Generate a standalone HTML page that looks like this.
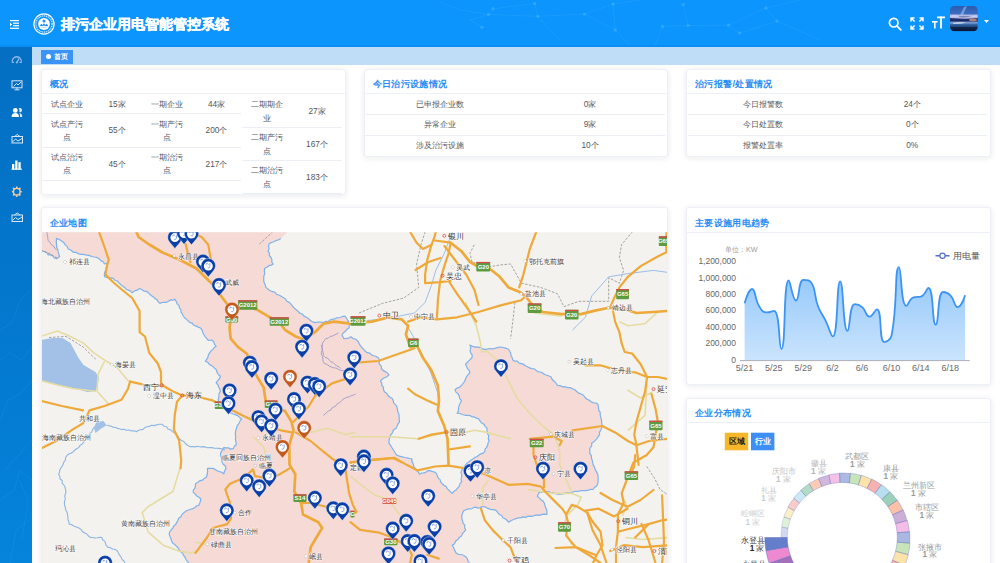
<!DOCTYPE html>
<html><head><meta charset="utf-8">
<style>
*{box-sizing:border-box;margin:0;padding:0}
html,body{width:1000px;height:563px;overflow:hidden;background:#FFFFFF;font-family:"Liberation Sans",sans-serif;color:#606266}
.abs{position:absolute}
#hdr{left:0;top:0;width:1000px;height:46.5px;background:#0B95FD;overflow:hidden}
#side{left:0;top:46.5px;width:32px;height:517px;background:linear-gradient(#046FC3 0%,#0376CB 40%,#047DD4 75%,#0584DC 100%)}
#crumb{left:32px;top:46.5px;width:968px;height:18px;background:#BFDDF6}
#tag{left:8.7px;top:3px;width:32px;height:14.8px;background:#3A94F8;color:#fff;font-size:6.9px;line-height:14.8px}
#tag i{position:absolute;left:5.5px;top:4.9px;width:5px;height:5px;border-radius:50%;background:#fff}
#tag span{position:absolute;left:13.5px;top:.5px;font-weight:bold}
.card{position:absolute;background:#fff;border:1px solid #EDF0F6;border-radius:3px;box-shadow:0 1px 6px rgba(0,20,60,.09);overflow:hidden}
.ttl{position:absolute;left:8px;top:8.5px;letter-spacing:.35px;font-size:9.4px;font-weight:bold;color:#2A8CF4;line-height:11px;white-space:nowrap}
.hl{position:absolute;left:0;right:0;height:1px;background:#EDF0F6}
.tx{position:absolute;font-size:8.3px;line-height:13px;color:#55575C;text-align:center;white-space:nowrap}
.rl{position:absolute;height:1px;background:#EBEEF5}
</style></head><body>
<div id="hdr" class="abs">
  <svg class="abs" style="left:0;top:0" width="1000" height="47" viewBox="0 0 1000 47">
    <g stroke="#5CC2FF" stroke-opacity=".22" stroke-width=".8" fill="none" style="filter:blur(.3px)">
      <polyline points="440,2 460,10 488.5,14.5 537.8,16.3 584.5,14.1 613.1,4 640,0"/>
      <polyline points="481.9,27.3 470,20 488.5,14.5 492.9,8.8 534.7,3.5 537.8,16.3 560,40"/>
      <polyline points="584.5,14.1 615.3,30 613.1,4"/>
      <polyline points="615.3,30 630,46"/>
      <polyline points="655,46 662.5,26.4 688,25.6 728.5,25.1 739.6,33 777,21.1 766,7.9 728.5,25.1"/>
      <polyline points="683.2,4.4 688,25.6"/>
      <polyline points="766,7.9 800,0"/>
      <polyline points="777,21.1 820,40"/>
    </g>
    <g fill="#6BCBFF" fill-opacity=".3" style="filter:blur(.3px)">
      <circle cx="492.9" cy="8.8" r="1.7"/><circle cx="488.5" cy="14.5" r="1.7"/><circle cx="534.7" cy="3.5" r="1.7"/>
      <circle cx="537.8" cy="16.3" r="1.7"/><circle cx="584.5" cy="14.1" r="1.7"/><circle cx="613.1" cy="4" r="1.7"/>
      <circle cx="615.3" cy="30" r="1.7"/><circle cx="662.5" cy="26.4" r="1.7"/><circle cx="683.2" cy="4.4" r="1.7"/>
      <circle cx="688" cy="25.6" r="1.7"/><circle cx="728.5" cy="25.1" r="1.7"/><circle cx="739.6" cy="33" r="1.7"/>
      <circle cx="766" cy="7.9" r="1.7"/><circle cx="777" cy="21.1" r="1.7"/><circle cx="481.9" cy="27.3" r="1.7"/>
    </g>
    <rect x="0" y="45.5" width="1000" height="1" fill="#0A7FE0" fill-opacity=".6"/>
  </svg>
  <svg class="abs" style="left:10px;top:19.5px" width="10" height="9" viewBox="0 0 10 9">
    <g fill="#fff"><rect x="0" y="0" width="9" height="1.2"/><rect x="3" y="2.6" width="6" height="1.2"/><rect x="3" y="5.1" width="6" height="1.2"/><rect x="0" y="7.7" width="9" height="1.2"/><path d="M0 2.4 L2.2 4.4 L0 6.4Z"/></g>
  </svg>
  <svg class="abs" style="left:32.5px;top:13.2px" width="22" height="22" viewBox="0 0 22 22">
    <circle cx="11" cy="11" r="10.1" fill="none" stroke="#fff" stroke-width="1.2"/>
    <circle cx="11" cy="11" r="8.1" fill="none" stroke="#fff" stroke-width="1.3" stroke-dasharray="1.1 .8" stroke-opacity=".85"/>
    <circle cx="11" cy="11" r="5.9" fill="#fff"/>
    <circle cx="11" cy="8.1" r="1.5" fill="#1E8CF2"/>
    <path d="M6.6 13.2 L8.2 10.8 L9.6 12 L11 10.2 L12.4 12 L13.8 10.8 L15.4 13.2 Q11 12.2 6.6 13.2Z" fill="#1E8CF2"/>
    <path d="M8.2 14.2 H13.8" stroke="#1E8CF2" stroke-width=".6" stroke-opacity=".6"/>
  </svg>
  <div class="abs" style="left:60.5px;top:16px;font-size:14.4px;line-height:17px;font-weight:bold;color:#fff;white-space:nowrap;-webkit-text-stroke:.35px #fff">排污企业用电智能管控系统</div>
  <svg class="abs" style="left:887.5px;top:16.5px" width="14" height="14" viewBox="0 0 14 14">
    <circle cx="5.7" cy="5.7" r="4.3" fill="none" stroke="#fff" stroke-width="1.7"/>
    <path d="M8.8 8.8 L12.8 12.8" stroke="#fff" stroke-width="1.9" stroke-linecap="round"/>
  </svg>
  <svg class="abs" style="left:909.5px;top:16.5px" width="14" height="13" viewBox="0 0 14 13">
    <g stroke="#fff" stroke-width="1.4" fill="none">
      <path d="M1 4.5 V1 H4.5 M1 1 L4.6 4.6"/><path d="M13 4.5 V1 H9.5 M13 1 L9.4 4.6"/>
      <path d="M1 8.5 V12 H4.5 M1 12 L4.6 8.4"/><path d="M13 8.5 V12 H9.5 M13 12 L9.4 8.4"/>
    </g>
  </svg>
  <svg class="abs" style="left:932px;top:16px" width="13" height="13" viewBox="0 0 13 13">
    <g fill="#fff"><rect x="5" y="0.5" width="8" height="1.8"/><rect x="8.1" y="0.5" width="1.8" height="12"/>
    <rect x="0" y="5" width="5.6" height="1.6"/><rect x="2" y="5" width="1.6" height="7.5"/></g>
  </svg>
  <svg class="abs" style="left:950.2px;top:6.4px" width="27.8" height="25.3" viewBox="0 0 27.8 25.3">
    <defs><clipPath id="avc"><rect width="27.8" height="25.3" rx="4.5"/></clipPath>
    <linearGradient id="avg" x1="0" y1="0" x2="0" y2="1">
      <stop offset="0" stop-color="#2B5BAE"/><stop offset=".3" stop-color="#3A6CC0"/><stop offset=".38" stop-color="#B9BEEA"/>
      <stop offset=".46" stop-color="#283C86"/><stop offset=".58" stop-color="#1A2760"/><stop offset=".66" stop-color="#7FA6DC"/>
      <stop offset=".74" stop-color="#2D5E9C"/><stop offset="1" stop-color="#0C1A3C"/></linearGradient></defs>
    <g clip-path="url(#avc)" style="filter:blur(.35px)">
      <rect width="27.8" height="25.3" fill="url(#avg)"/>
      <path d="M10 9 L14 1 L17 0 L13 9Z" fill="#A8C4F2" fill-opacity=".55"/>
      <path d="M0 10 Q6 8 10 11 Q16 12 22 10 Q26 9 27.8 10 L27.8 12 Q18 13 10 12.5 Q4 12 0 12Z" fill="#E4E0FA" fill-opacity=".75"/>
      <ellipse cx="23" cy="14" rx="4" ry="1.2" fill="#F0A27A" fill-opacity=".7"/>
      <path d="M3 17 Q9 15.5 16 16.5 Q12 18 3 18Z" fill="#DDE8FA" fill-opacity=".7"/>
      <rect y="21" width="27.8" height="4.3" fill="#08122E" fill-opacity=".6"/>
    </g>
  </svg>
  <svg class="abs" style="left:984px;top:20px" width="5" height="3" viewBox="0 0 5 3"><path d="M0 0H5L2.5 3Z" fill="#fff"/></svg>
</div>
<div id="side" class="abs">
  <svg class="abs" style="left:0;top:0" width="32" height="517" viewBox="0 46.5 32 517">
    <g stroke="#3FB0FF" stroke-opacity=".22" stroke-width=".7" fill="none">
      <polyline points="0,330 12,322 20,300 30,290"/><polyline points="0,360 10,352 22,360 32,345"/>
      <polyline points="0,420 8,400 22,392 32,380"/><polyline points="5,470 18,455 32,440"/>
      <polyline points="0,500 14,490 20,470 32,480"/><polyline points="10,563 16,530 28,520"/>
      <polyline points="20,480 28,500 22,540"/>
    </g>
    <!-- gauge -->
    <g fill="none" stroke="#8EB8F2" stroke-width="1.3">
      <path d="M12.3 62 A4.6 4.6 0 1 1 21.2 62"/>
      <path d="M16.8 62 L19 58.2"/>
    </g>
    <g fill="#8EB8F2"><circle cx="16.8" cy="62" r="1"/><rect x="12" y="61.3" width="2" height="1.2"/><rect x="19.5" y="61.3" width="2" height="1.2"/></g>
    <!-- monitor -->
    <g fill="none" stroke="#D6E6F8" stroke-width="1">
      <rect x="12" y="80.3" width="10" height="7"/>
      <path d="M13.5 86 L16.5 83 L18 84.5 L21 81.5"/>
      <path d="M14.5 89.3 H19.5 M17 87.3 V89.3"/>
    </g>
    <!-- users -->
    <g fill="#fff">
      <circle cx="15.3" cy="109.9" r="2.4"/>
      <path d="M11.6 116.4 Q11.6 112.6 15.3 112.6 Q19 112.6 19 116.4Z"/>
      <path d="M18.6 107.8 A2.2 2.2 0 1 1 19.4 111.8 Q20.2 110 18.6 107.8Z" fill-opacity=".85"/>
      <path d="M19.6 112.6 Q22.2 113 22.2 116.4 H20 Q20 114 19.6 112.6Z" fill-opacity=".85"/>
    </g>
    <!-- picture 1 -->
    <g fill="none" stroke="#D6E6F8" stroke-width="1">
      <rect x="12" y="136" width="10.5" height="6.5"/>
      <path d="M14.5 136 L17.2 134 L20 136"/>
      <path d="M12.5 141.5 L15.5 138.5 L18 140.5 L22 138"/>
    </g>
    <!-- bar chart -->
    <g fill="#fff">
      <rect x="12" y="163.5" width="2.3" height="5.5"/><rect x="15.2" y="160" width="2.3" height="9"/>
      <rect x="18.4" y="161.7" width="2.3" height="7.3"/><rect x="11.5" y="168.2" width="10.5" height="1"/>
    </g>
    <!-- gear -->
    <g fill="none" stroke="#F2CDA8" stroke-width="1.4">
      <circle cx="16.8" cy="191.2" r="3.3"/>
    </g>
    <g fill="#F2CDA8">
      <rect x="16" y="186" width="1.6" height="1.6"/><rect x="16" y="194.8" width="1.6" height="1.6"/>
      <rect x="11.9" y="190.4" width="1.6" height="1.6"/><rect x="20.1" y="190.4" width="1.6" height="1.6"/>
      <rect x="12.9" y="187.2" width="1.6" height="1.6" transform="rotate(45 13.7 188)"/><rect x="19.1" y="187.2" width="1.6" height="1.6" transform="rotate(45 19.9 188)"/>
      <rect x="12.9" y="193.6" width="1.6" height="1.6" transform="rotate(45 13.7 194.4)"/><rect x="19.1" y="193.6" width="1.6" height="1.6" transform="rotate(45 19.9 194.4)"/>
    </g>
    <!-- picture 2 -->
    <g fill="none" stroke="#D6E6F8" stroke-width="1">
      <rect x="12" y="214.5" width="10.5" height="6.5"/>
      <path d="M14.5 214.5 L17.2 212.5 L20 214.5"/>
      <path d="M12.5 220 L15.5 217 L18 219 L22 216.5"/>
    </g>
  </svg>
</div>
<div id="crumb" class="abs"><div id="tag" class="abs"><i></i><span>首页</span></div></div>

<!-- card 1 -->
<div class="card" style="left:40.5px;top:68.5px;width:305px;height:126.5px">
  <div class="ttl">概况</div>
  <div class="hl" style="top:23.8px"></div>
  <div class="rl" style="left:0px;top:43.6px;width:199.5px"></div>
  <div class="rl" style="left:0px;top:77.0px;width:199.5px"></div>
  <div class="rl" style="left:0px;top:110.2px;width:199.5px"></div>
  <div class="rl" style="left:201.1px;top:57.4px;width:99px"></div>
  <div class="rl" style="left:201.1px;top:90.5px;width:99px"></div>
  <div class="rl" style="left:201.1px;top:123.4px;width:99px"></div>
  <div class="tx" style="left:7.0px;top:28.5px;width:36px;white-space:normal;line-height:13.5px">试点企业</div>
  <div class="tx" style="left:51.5px;top:28.5px;width:48px;white-space:normal;line-height:13.5px">15家</div>
  <div class="tx" style="left:107.0px;top:28.5px;width:36px;white-space:normal;line-height:13.5px">一期企业</div>
  <div class="tx" style="left:151.0px;top:28.5px;width:48px;white-space:normal;line-height:13.5px">44家</div>
  <div class="tx" style="left:7.0px;top:48.1px;width:36px;white-space:normal;line-height:13.5px">试点产污点</div>
  <div class="tx" style="left:51.5px;top:54.9px;width:48px;white-space:normal;line-height:13.5px">55个</div>
  <div class="tx" style="left:107.0px;top:48.1px;width:36px;white-space:normal;line-height:13.5px">一期产污点</div>
  <div class="tx" style="left:151.0px;top:54.9px;width:48px;white-space:normal;line-height:13.5px">200个</div>
  <div class="tx" style="left:7.0px;top:81.3px;width:36px;white-space:normal;line-height:13.5px">试点治污点</div>
  <div class="tx" style="left:51.5px;top:88.0px;width:48px;white-space:normal;line-height:13.5px">45个</div>
  <div class="tx" style="left:107.0px;top:81.3px;width:36px;white-space:normal;line-height:13.5px">一期治污点</div>
  <div class="tx" style="left:151.0px;top:88.0px;width:48px;white-space:normal;line-height:13.5px">217个</div>
  <div class="tx" style="left:207.5px;top:28.7px;width:36px;white-space:normal;line-height:13.5px">二期期企业</div>
  <div class="tx" style="left:251.5px;top:35.5px;width:48px;white-space:normal;line-height:13.5px">27家</div>
  <div class="tx" style="left:207.5px;top:61.8px;width:36px;white-space:normal;line-height:13.5px">二期产污点</div>
  <div class="tx" style="left:251.5px;top:68.5px;width:48px;white-space:normal;line-height:13.5px">167个</div>
  <div class="tx" style="left:207.5px;top:94.9px;width:36px;white-space:normal;line-height:13.5px">二期治污点</div>
  <div class="tx" style="left:251.5px;top:101.6px;width:48px;white-space:normal;line-height:13.5px">183个</div>
</div>
<!-- card 2 -->
<div class="card" style="left:363.5px;top:68.5px;width:304.5px;height:88px">
  <div class="ttl">今日治污设施情况</div>
  <div class="hl" style="top:23.8px"></div>
  <div class="tx" style="left:0.5px;top:28.0px;width:150.0px">已申报企业数</div>
  <div class="tx" style="left:150.5px;top:28.0px;width:150.0px">0家</div>
  <div class="rl" style="left:0.5px;top:44.5px;width:300.0px"></div>
  <div class="tx" style="left:0.5px;top:48.5px;width:150.0px">异常企业</div>
  <div class="tx" style="left:150.5px;top:48.5px;width:150.0px">9家</div>
  <div class="rl" style="left:0.5px;top:65.0px;width:300.0px"></div>
  <div class="tx" style="left:0.5px;top:69.0px;width:150.0px">涉及治污设施</div>
  <div class="tx" style="left:150.5px;top:69.0px;width:150.0px">10个</div>
</div>
<!-- card 3 -->
<div class="card" style="left:686px;top:68.5px;width:304.5px;height:88px">
  <div class="ttl">治污报警/处置情况</div>
  <div class="hl" style="top:23.8px"></div>
  <div class="tx" style="left:1.0px;top:28.0px;width:149.5px">今日报警数</div>
  <div class="tx" style="left:150.5px;top:28.0px;width:149.5px">24个</div>
  <div class="rl" style="left:1.0px;top:44.5px;width:299.0px"></div>
  <div class="tx" style="left:1.0px;top:48.5px;width:149.5px">今日处置数</div>
  <div class="tx" style="left:150.5px;top:48.5px;width:149.5px">0个</div>
  <div class="rl" style="left:1.0px;top:65.0px;width:299.0px"></div>
  <div class="tx" style="left:1.0px;top:69.0px;width:149.5px">报警处置率</div>
  <div class="tx" style="left:150.5px;top:69.0px;width:149.5px">0%</div>
</div>
<!-- map card -->
<div class="card" style="left:40.5px;top:207px;width:627.5px;height:380px">
  <div class="ttl">企业地图</div>
  <!--MAP--><svg class="abs" style="left:-1px;top:-1px" width="627.5" height="357" viewBox="40.5 207 627.5 357"><defs><clipPath id="mc"><rect x="41" y="232.2" width="626.5" height="331"/></clipPath></defs><g clip-path="url(#mc)"><rect x="41" y="232" width="627" height="332" fill="#F3F2EE"/><polygon points="41.0,232.0 287.0,232.0 280.3,238.4 268.6,243.7 267.5,251.2 272.8,264.0 264.3,268.2 263.2,279.0 265.4,287.4 271.8,291.7 280.3,296.0 288.8,302.4 297.3,311.0 305.9,317.3 314.4,322.6 323.0,322.6 331.5,319.4 344.3,316.2 349.0,322.6 348.6,328.0 341.5,335.0 343.3,338.6 350.4,336.8 357.5,341.3 364.9,351.4 377.7,357.8 380.9,368.5 388.4,374.9 379.9,381.2 384.1,391.9 391.6,398.3 396.9,409.0 399.0,421.8 390.5,434.6 388.4,443.1 392.6,449.5 396.0,455.0 401.8,456.9 411.4,458.8 413.3,466.5 419.1,474.2 428.7,470.4 434.5,472.3 440.2,481.9 451.7,493.4 457.5,487.6 461.3,481.9 460.4,472.3 465.2,464.6 472.8,458.8 484.3,451.6 488.6,441.0 486.5,428.2 477.9,418.6 467.3,415.4 456.6,413.2 460.9,400.4 454.5,389.8 460.9,385.5 469.4,372.7 465.1,364.2 471.5,357.8 469.4,345.0 477.9,347.1 486.5,349.3 500.0,347.0 508.0,349.3 512.3,360.0 522.9,364.2 535.7,370.6 550.6,377.0 557.0,385.5 569.8,387.6 580.5,394.0 589.0,400.4 597.6,404.7 599.7,415.4 601.8,426.0 597.6,436.7 591.2,443.1 589.3,451.3 592.5,464.6 597.3,474.2 597.3,483.8 592.5,489.5 581.0,490.5 571.3,492.4 557.9,494.3 546.4,491.5 538.7,492.4 536.8,496.3 542.5,501.1 546.4,510.7 546.4,514.5 527.2,516.4 513.8,519.3 508.0,522.2 495.9,510.7 484.4,506.8 472.8,507.8 463.2,510.7 461.3,518.3 465.2,529.9 457.5,539.5 451.7,545.2 455.6,552.9 465.2,556.7 469.0,563.0 188.4,563.0 182.0,552.9 172.4,543.3 168.6,533.7 172.4,528.0 178.2,518.3 185.9,510.7 198.2,505.5 200.4,499.0 192.8,492.4 195.0,483.7 205.9,477.0 207.0,468.4 212.4,468.4 223.3,473.8 225.5,468.4 221.1,459.7 220.0,453.1 223.3,447.6 232.6,448.7 235.8,444.5 234.8,433.8 236.9,425.3 241.2,418.9 234.8,414.6 222.0,408.2 217.7,399.7 219.9,391.2 215.6,382.6 219.9,376.2 213.5,367.7 204.9,361.3 209.2,352.8 215.6,346.4 211.3,340.0 207.7,340.3 200.0,328.0 189.3,322.6 181.8,314.0 178.6,305.6 174.3,299.2 168.0,301.3 159.4,303.4 153.0,297.0 146.6,291.7 139.1,288.5 131.7,292.8 124.2,287.4 116.8,281.0 110.4,277.8 104.0,276.8 105.0,270.4 107.2,263.0 104.0,264.0 98.6,258.7 91.2,256.5 82.6,254.4 73.0,252.3 67.7,249.0 63.5,242.7 56.0,238.4 56.0,244.8 59.2,256.5 56.0,258.7 40.0,250.1 41.0,232.0" fill="#F5DAD6"/><polygon points="40.0,340.0 52.0,338.0 62.0,338.0 70.0,343.0 78.0,358.0 83.0,365.0 95.0,372.0 98.6,378.0 95.4,391.0 87.0,392.0 72.0,388.0 57.0,385.0 40.0,381.0" fill="#A3C1E6"/><polygon points="93.3,427.4 96.0,422.0 103.0,421.0 106.1,425.3 100.0,429.0 95.0,433.0" fill="#A3C1E6"/><polyline points="280.3,238.4 278.1,239.8 275.6,240.5 273.4,241.7 270.9,242.5 268.6,243.7 268.1,246.2 268.5,248.8 267.5,251.2 269.0,253.1 268.8,255.6 270.5,257.5 271.4,259.6 271.3,262.1 272.8,264.0 270.7,265.1 268.3,265.7 266.4,267.2 264.3,268.2 263.8,270.9 264.2,273.6 263.3,276.3 263.2,279.0 263.4,281.9 264.6,284.6 265.4,287.4 267.3,289.1 269.5,290.5 271.8,291.7 274.2,292.2 275.9,294.2 278.1,295.0 280.3,296.0 282.6,297.4 284.9,298.7 286.4,301.2 288.8,302.4 290.5,304.1 292.0,306.1 293.5,307.9 295.4,309.5 297.3,311.0 299.1,313.1 301.7,314.0 303.5,316.1 305.9,317.3 308.1,318.6 309.8,320.5 312.0,321.7 314.4,322.6 317.3,322.0 320.1,322.1 323.0,322.6 325.0,321.4 327.5,321.6 329.3,320.1 331.5,319.4 334.1,318.9 336.6,317.8 339.2,317.5 341.7,316.7 344.3,316.2 346.0,318.2 347.3,320.5 349.0,322.6 348.7,325.3 348.6,328.0 346.4,329.3 344.9,331.3 342.9,332.8 341.5,335.0 343.3,338.6 345.8,338.5 348.2,338.1 350.4,336.8 352.6,338.5 355.4,339.4 357.5,341.3 358.6,343.6 359.9,345.7 361.5,347.7 363.3,349.4 364.9,351.4 366.9,352.7 369.3,353.2 371.1,355.0 373.4,355.8 375.7,356.5 377.7,357.8 378.9,359.8 378.5,362.2 379.0,364.4 380.8,366.2 380.9,368.5 382.5,370.4 384.7,371.6 386.8,372.9 388.4,374.9 386.4,376.7 383.9,377.7 381.7,379.2 379.9,381.2 381.3,383.1 381.4,385.5 383.0,387.4 383.0,389.9 384.1,391.9 386.1,393.3 387.5,395.5 389.3,397.2 391.6,398.3 392.7,400.4 393.1,402.9 395.0,404.6 396.4,406.6 396.9,409.0 397.2,411.6 398.4,414.0 398.6,416.6 398.7,419.2 399.0,421.8 397.5,423.8 396.6,426.3 395.3,428.6 392.9,430.0 392.1,432.6 390.5,434.6 389.2,437.3 388.6,440.1 388.4,443.1 389.9,445.1 391.2,447.3 392.6,449.5 394.3,452.3 396.0,455.0 398.8,456.1 401.8,456.9 404.2,457.5 406.6,457.9 409.0,458.5 411.4,458.8 411.4,461.5 412.7,463.9 413.3,466.5 414.8,468.4 416.0,470.5 417.9,472.1 419.1,474.2 421.4,473.0 424.1,472.9 426.3,471.4 428.7,470.4 431.6,471.4 434.5,472.3 436.2,473.9 436.9,476.1 437.8,478.1 439.6,479.6 440.2,481.9 441.7,483.7 443.4,485.3 445.6,486.4 446.6,488.6 448.4,490.1 449.9,491.9 451.7,493.4 453.5,491.3 455.8,489.7 457.5,487.6 459.0,485.9 459.5,483.4 461.3,481.9 460.5,479.6 461.1,477.1 461.3,474.6 460.4,472.3 461.3,470.2 462.7,468.4 464.1,466.6 465.2,464.6 466.9,462.9 468.9,461.5 470.7,460.0 472.8,458.8 474.6,457.4 476.7,456.5 478.4,455.0 480.4,453.9 482.6,453.1 484.3,451.6 484.5,449.2 486.1,447.4 487.2,445.4 487.5,443.0 488.6,441.0 487.8,438.5 488.2,435.8 487.0,433.4 486.5,430.8 486.5,428.2 484.7,426.3 483.3,424.2 480.9,422.8 479.4,420.7 477.9,418.6 475.7,418.2 473.8,416.9 471.5,416.8 469.6,415.6 467.3,415.4 464.5,415.3 461.9,414.5 459.3,413.5 456.6,413.2 457.8,411.2 458.0,408.9 458.4,406.7 459.0,404.5 460.2,402.5 460.9,400.4 459.2,398.5 458.7,395.9 457.5,393.8 455.4,392.1 454.5,389.8 456.5,388.1 459.0,387.3 460.9,385.5 462.5,383.5 464.1,381.5 465.0,379.0 466.1,376.7 467.7,374.7 469.4,372.7 468.7,370.4 467.0,368.6 466.0,366.4 465.1,364.2 466.6,362.5 468.2,360.9 469.8,359.3 471.5,357.8 471.7,355.1 470.2,352.8 469.6,350.2 470.4,347.5 469.4,345.0 472.1,346.2 474.9,347.1 477.9,347.1 480.1,347.6 482.0,348.8 484.2,349.3 486.5,349.3 488.7,348.5 491.1,348.9 493.3,348.6 495.5,348.0 497.8,347.4 500.0,347.0 502.7,347.5 505.4,348.3 508.0,349.3 509.2,351.3 510.3,353.4 510.5,355.8 511.7,357.7 512.3,360.0 514.3,361.2 516.8,361.1 518.5,363.0 520.7,363.6 522.9,364.2 524.8,365.8 526.9,366.8 529.0,367.9 531.4,368.6 533.9,368.9 535.7,370.6 537.7,371.8 540.1,372.0 542.2,373.1 544.1,374.5 546.3,375.2 548.5,376.0 550.6,377.0 551.7,379.5 553.7,381.3 555.6,383.2 557.0,385.5 559.6,385.6 562.0,386.8 564.7,386.7 567.2,387.6 569.8,387.6 572.0,388.7 574.3,389.8 576.2,391.5 578.1,393.1 580.5,394.0 582.9,395.2 584.5,397.5 586.5,399.3 589.0,400.4 591.0,401.9 593.1,403.0 595.8,403.0 597.6,404.7 597.9,407.4 598.2,410.1 599.8,412.6 599.7,415.4 600.5,418.0 601.1,420.6 601.2,423.4 601.8,426.0 601.1,428.2 600.2,430.3 598.9,432.3 599.1,434.8 597.6,436.7 596.4,438.7 594.8,440.3 593.2,441.9 591.2,443.1 591.2,446.0 589.3,448.4 589.3,451.3 589.4,453.6 590.9,455.6 590.9,458.0 591.7,460.1 592.2,462.3 592.5,464.6 593.9,466.9 594.7,469.5 596.0,471.9 597.3,474.2 597.5,476.6 597.7,479.0 597.5,481.4 597.3,483.8 596.1,486.0 594.0,487.5 592.5,489.5 590.2,489.4 587.9,490.1 585.7,490.7 583.3,490.7 581.0,490.5 578.6,491.1 576.1,491.3 573.6,491.5 571.3,492.4 569.1,492.9 566.8,492.6 564.6,493.2 562.4,493.8 560.2,494.2 557.9,494.3 555.6,493.7 553.4,492.9 551.0,492.7 548.8,491.8 546.4,491.5 543.8,491.9 541.3,492.5 538.7,492.4 536.8,496.3 538.7,497.9 540.4,499.7 542.5,501.1 544.0,503.3 544.5,505.9 545.5,508.3 546.4,510.7 546.4,514.5 543.9,514.2 541.5,514.4 539.2,515.4 536.7,514.9 534.4,515.3 532.0,516.3 529.6,516.2 527.2,516.4 525.1,517.4 522.6,516.9 520.5,517.6 518.2,517.8 515.9,518.4 513.8,519.3 510.8,520.5 508.0,522.2 506.5,520.3 504.6,518.8 502.4,517.7 501.2,515.5 498.9,514.5 497.3,512.7 495.9,510.7 493.7,509.6 491.1,509.7 488.8,508.9 486.5,508.1 484.4,506.8 482.0,506.5 479.8,507.6 477.5,508.1 475.1,507.1 472.8,507.8 470.6,509.0 467.9,508.8 465.5,509.7 463.2,510.7 462.1,513.1 461.3,515.6 461.3,518.3 462.0,520.7 462.5,523.1 464.3,525.1 464.1,527.7 465.2,529.9 463.6,531.8 461.9,533.6 461.0,536.0 458.8,537.4 457.5,539.5 455.1,541.0 454.1,543.7 451.7,545.2 453.2,547.7 454.2,550.4 455.6,552.9 457.8,554.3 460.5,554.5 463.0,555.3 465.2,556.7 466.8,558.6 467.6,561.0 469.0,563.0" fill="none" stroke="#7FB2EA" stroke-width="1.2" stroke-linejoin="round"/><polyline points="188.4,563.0 186.8,561.2 185.4,559.3 184.4,557.0 182.9,555.2 182.0,552.9 180.0,551.7 178.7,549.8 177.6,547.7 175.9,546.2 174.3,544.6 172.4,543.3 171.1,541.0 170.5,538.5 169.3,536.2 168.6,533.7 169.5,531.5 170.7,529.6 172.4,528.0 173.2,525.9 175.2,524.4 176.3,522.4 177.4,520.5 178.2,518.3 180.4,516.7 181.7,514.2 183.8,512.4 185.9,510.7 188.0,510.0 190.1,509.3 192.2,508.6 194.3,507.7 195.9,505.8 198.2,505.5 199.1,503.4 199.9,501.2 200.4,499.0 198.5,497.3 196.3,496.0 194.7,494.1 192.8,492.4 192.8,490.1 194.5,488.2 194.9,486.0 195.0,483.7 197.2,482.4 199.2,480.8 201.8,480.2 203.8,478.4 205.9,477.0 206.8,474.2 207.1,471.3 207.0,468.4 209.7,468.4 212.4,468.4 214.6,469.4 216.7,470.7 219.0,471.6 221.3,472.3 223.3,473.8 224.1,471.0 225.5,468.4 224.8,466.0 222.7,464.3 221.6,462.2 221.1,459.7 220.9,457.5 220.1,455.4 220.0,453.1 221.7,450.4 223.3,447.6 225.6,447.8 228.0,447.9 230.2,449.1 232.6,448.7 233.9,446.3 235.8,444.5 235.4,441.8 234.9,439.2 235.2,436.5 234.8,433.8 235.2,430.9 236.0,428.1 236.9,425.3 238.6,423.4 239.6,420.9 241.2,418.9 239.1,417.4 237.2,415.6 234.8,414.6 232.4,414.0 230.3,413.0 228.2,411.7 226.4,410.0 224.2,409.1 222.0,408.2 220.6,406.2 219.6,404.1 218.4,402.0 217.7,399.7 218.4,396.9 218.5,393.9 219.9,391.2 219.1,388.9 218.2,386.7 217.2,384.5 215.6,382.6 217.3,380.7 219.0,378.7 219.9,376.2 217.8,374.5 216.5,372.1 215.6,369.4 213.5,367.7 211.6,365.8 209.1,364.6 207.4,362.4 204.9,361.3 206.1,359.3 207.4,357.3 207.9,354.8 209.2,352.8 210.5,350.9 212.3,349.5 213.6,347.6 215.6,346.4 214.0,344.4 213.3,341.8 211.3,340.0 207.7,340.3 206.2,338.4 204.6,336.6 203.3,334.5 202.2,332.3 201.6,329.8 200.0,328.0 197.8,327.1 195.6,326.1 193.3,325.3 191.7,323.1 189.3,322.6 187.7,320.9 186.0,319.4 184.3,317.8 182.8,316.1 181.8,314.0 180.6,312.1 180.4,309.7 178.9,307.9 178.6,305.6 176.6,303.8 175.7,301.3 174.3,299.2 172.3,300.2 169.9,299.9 168.0,301.3 166.0,302.3 163.7,302.3 161.5,302.5 159.4,303.4 157.7,301.9 156.7,299.7 154.6,298.6 153.0,297.0 150.6,295.5 148.7,293.6 146.6,291.7 143.8,291.2 141.6,289.7 139.1,288.5 136.8,290.2 133.9,290.9 131.7,292.8 130.1,291.1 127.9,290.1 125.7,289.3 124.2,287.4 122.1,286.1 120.3,284.5 118.4,282.9 116.8,281.0 114.5,280.3 112.8,278.4 110.4,277.8 107.1,277.8 104.0,276.8 103.9,273.5 105.0,270.4 106.3,268.1 106.6,265.5 107.2,263.0 104.0,264.0 102.7,261.7 100.3,260.6 98.6,258.7 96.3,257.4 93.7,257.0 91.2,256.5 89.1,255.6 87.0,255.1 84.7,254.9 82.6,254.4 80.1,254.4 77.7,253.7 75.5,252.3 73.0,252.3 70.6,250.2 67.7,249.0 66.8,246.6 64.7,244.9 63.5,242.7 61.1,241.1 58.7,239.5 56.0,238.4 55.8,241.6 56.0,244.8 56.2,247.3 57.2,249.5 57.7,251.9 58.3,254.2 59.2,256.5 56.0,258.7 53.8,257.9 52.3,256.0 50.3,254.9 47.7,254.9 46.3,252.7 44.3,251.7 42.1,251.0 40.0,250.1" fill="none" stroke="#7FB2EA" stroke-width="1.2" stroke-linejoin="round"/><polyline points="106.1,425.3 108.3,425.7 110.5,426.1 112.4,427.3 114.8,427.2 116.7,428.4 118.9,428.8 121.0,429.6 123.6,429.3 126.0,430.3 128.6,430.0 131.0,430.9 133.6,430.8 136.0,431.7 137.9,430.3 140.2,429.8 142.6,429.4 144.3,427.6 146.5,426.8 148.8,426.4 150.9,425.3 153.6,425.6 156.2,424.9 158.8,424.3 161.5,424.2 163.3,426.2 166.1,426.7 167.6,429.1 170.2,430.0 172.2,431.7 174.3,433.0 176.0,434.7 177.5,436.6 178.7,438.8 180.7,440.2 183.1,441.4 184.9,443.5 187.0,445.2 189.3,446.6 192.0,446.5 194.6,446.9 197.3,446.3 200.0,447.0 202.3,446.6 204.6,446.9 206.9,447.8 209.2,447.6 211.5,447.6 213.8,448.2 216.1,448.2 218.4,448.4 221.5,448.9 224.5,450.0" fill="none" stroke="#8DB6E4" stroke-width="1.1" stroke-linejoin="round"/><polyline points="93.3,427.4 92.2,429.6 91.2,431.9 89.3,433.7 88.7,436.2 86.9,438.0 85.1,439.7 83.5,441.7 82.0,443.8 79.8,445.1 78.4,447.4 76.2,448.7 74.4,450.0 72.8,451.7 70.9,453.0 68.8,453.8 66.9,455.0 65.2,457.4 64.8,460.4 63.0,462.7 62.4,465.1 60.9,467.2 59.5,469.4 59.1,471.9 58.2,474.2 59.3,476.3 59.5,478.8 61.7,480.5 61.6,483.1 63.3,485.0 64.5,487.1 65.0,489.5 65.4,491.7 65.0,493.9 64.1,496.1 64.9,498.4 64.2,500.6 63.9,502.8 64.0,505.0 64.8,507.3 65.1,509.8 66.4,512.0 67.0,514.4 67.4,516.8 67.4,519.4 68.3,521.7 68.8,524.1 71.3,524.8 73.6,526.2 76.0,527.0 78.4,528.0 80.5,529.4 82.0,531.5 84.0,533.0 86.4,534.1 88.0,536.0 90.0,537.5 92.3,537.5 94.6,538.0 96.8,537.8 99.1,537.2 101.4,537.5 102.0,539.8 104.2,541.1 105.0,543.2 105.7,545.4 107.2,547.1 109.8,547.6 112.0,549.0 114.6,549.4 116.8,551.0 117.9,553.1 119.1,555.2 120.6,557.1 121.5,559.3 123.4,560.9 124.5,563.0" fill="none" stroke="#8DB6E4" stroke-width="1.1" stroke-linejoin="round"/><polyline points="322.0,343.0 321.8,345.3 321.7,347.7 321.8,350.0 320.8,352.2 321.0,354.6 322.1,356.7 322.3,359.1 322.6,361.4 323.7,363.5 326.3,364.3 328.5,365.9 330.9,367.0 333.0,367.8 335.3,368.0 337.3,369.0 339.3,370.1 341.5,370.6 343.7,370.8 345.9,371.2 348.2,370.9 350.4,371.1 352.6,371.2 354.8,371.8 357.0,372.0" fill="none" stroke="#A7A2C6" stroke-width="1"/><polyline points="338.0,333.0 335.9,334.0 333.9,335.0 331.9,336.1 329.5,336.4 327.8,338.1 325.5,338.6 323.7,340.8 322.0,343.0" fill="none" stroke="#A7A2C6" stroke-width="1"/><polyline points="320.8,345.0 321.4,347.7 322.0,350.3 322.7,353.0 322.9,355.7 324.6,357.4 327.0,358.1 328.6,360.0 330.3,361.7 332.7,362.5 334.3,364.3 336.1,365.7 338.4,366.7 340.0,368.5" fill="none" stroke="#A7A2C6" stroke-width="1"/><polyline points="322.9,415.4 324.7,413.9 326.4,412.5 328.0,410.8 330.3,410.0 331.5,407.9 333.6,406.9 335.6,405.7 336.9,403.7 339.0,402.6 340.8,401.2 342.2,399.4 344.3,398.3 346.4,397.3 348.7,396.8 350.7,395.7 352.9,395.1 355.0,394.0" fill="none" stroke="#A7A2C6" stroke-width="1"/><polyline points="46.4,232.0 46.8,234.8 47.3,237.7 47.5,240.5 49.5,242.2 50.6,244.5 53.0,245.9 54.3,248.1 56.0,250.0" fill="none" stroke="#A7A2C6" stroke-width="1"/><polyline points="358.5,313.0 382.0,303.4 403.3,298.0 418.2,287.4 416.1,264.0 420.4,244.8 424.6,232.0" fill="none" stroke="#8E8E8E" stroke-width=".8" stroke-dasharray="2.5 1.5"/><polyline points="473.7,244.8 469.4,253.3 471.5,261.9 486.5,267.2 499.3,265.0 510.1,264.0 520.8,283.2 540.0,287.4 557.0,293.8 563.4,306.6 578.4,301.3 608.2,301.3 608.2,277.8 618.9,283.2 623.1,270.4 618.9,257.6 621.0,244.8 631.7,232.0" fill="none" stroke="#8E8E8E" stroke-width=".8" stroke-dasharray="2.5 1.5"/><polyline points="514.4,302.4 512.3,321.6 510.1,338.6" fill="none" stroke="#8E8E8E" stroke-width=".8" stroke-dasharray="2.5 1.5"/><polyline points="40.0,250.0 50.0,254.0 58.0,259.0" fill="none" stroke="#8E8E8E" stroke-width=".8" stroke-dasharray="2.5 1.5"/><polyline points="646.2,466.5 653.9,478.0 659.6,489.5 668.0,495.3" fill="none" stroke="#8E8E8E" stroke-width=".8" stroke-dasharray="2.5 1.5"/><polyline points="48.5,337.5 65.6,336.5 82.6,347.0 96.0,360.0" fill="none" stroke="#8E8E8E" stroke-width=".8" stroke-dasharray="2.5 1.5"/><polyline points="259.0,244.0 272.0,232.0" fill="none" stroke="#8E8E8E" stroke-width=".8" stroke-dasharray="2.5 1.5"/><polyline points="350.0,321.6 382.0,319.4 414.0,313.0 424.6,302.4 431.0,285.3 435.3,270.4 443.8,253.3 450.2,236.3 452.0,232.0" fill="none" stroke="#9DBEE8" stroke-width="1"/><polyline points="405.4,323.7 414.0,338.6 420.4,352.0 430.0,372.0 437.0,392.0" fill="none" stroke="#9DBEE8" stroke-width="1"/><polyline points="572.0,330.0 584.8,317.3 591.2,296.0 608.2,276.8 627.4,273.6 653.0,270.4 668.0,272.5" fill="none" stroke="#9DBEE8" stroke-width="1"/><polyline points="40.0,336.5 57.0,331.0 69.9,336.5 82.6,342.9 93.3,352.8 106.1,361.3 116.8,367.7 127.4,380.5 129.6,381.6" fill="none" stroke="#E5DCA2" stroke-width="1.6" stroke-linejoin="round"/><polyline points="104.0,361.3 97.6,374.1 96.5,391.2 108.2,404.0" fill="none" stroke="#E5DCA2" stroke-width="1.6" stroke-linejoin="round"/><polyline points="40.0,380.5 57.0,385.0 72.0,388.5 95.4,391.2" fill="none" stroke="#E5DCA2" stroke-width="1.6" stroke-linejoin="round"/><polyline points="180.1,466.5 172.4,491.5 147.5,506.8 141.7,512.6 147.5,531.8 162.8,545.2 178.2,551.0 189.7,552.9 200.0,550.0" fill="none" stroke="#E5DCA2" stroke-width="1.6" stroke-linejoin="round"/><polyline points="465.1,302.4 475.8,325.8 480.0,342.9 481.1,352.0 486.5,351.4 499.3,362.0 507.8,381.2" fill="none" stroke="#E5DCA2" stroke-width="1.6" stroke-linejoin="round"/><polyline points="350.0,436.7 388.4,436.7 418.2,438.8 444.9,432.4 465.1,432.4 473.7,430.3 486.5,432.4 510.1,438.8" fill="none" stroke="#E5DCA2" stroke-width="1.6" stroke-linejoin="round"/><polyline points="508.0,381.2 516.5,398.3 529.3,413.2 542.1,426.0 550.6,432.4 557.0,443.1 559.2,451.6 559.2,465.0 571.3,492.4" fill="none" stroke="#E5DCA2" stroke-width="1.6" stroke-linejoin="round"/><polyline points="533.6,313.0 561.3,316.2" fill="none" stroke="#E5DCA2" stroke-width="1.6" stroke-linejoin="round"/><polyline points="618.9,321.6 627.4,325.8 644.5,323.7 657.3,312.0" fill="none" stroke="#E5DCA2" stroke-width="1.6" stroke-linejoin="round"/><polyline points="350.0,476.1 361.5,485.7 375.0,495.3 388.4,500.1 396.0,510.7 403.7,520.3" fill="none" stroke="#E5DCA2" stroke-width="1.6" stroke-linejoin="round"/><polyline points="488.2,480.0 482.4,487.6 482.4,504.9" fill="none" stroke="#E5DCA2" stroke-width="1.6" stroke-linejoin="round"/><polyline points="527.2,489.5 552.1,493.4 571.3,493.4 580.9,497.2 577.1,504.9 565.6,516.4 563.7,528.0 571.3,545.2" fill="none" stroke="#E5DCA2" stroke-width="1.6" stroke-linejoin="round"/><polyline points="310.1,432.4 327.2,428.2 344.3,434.6 355.0,432.4" fill="none" stroke="#E5DCA2" stroke-width="1.6" stroke-linejoin="round"/><polyline points="252.6,436.7 263.2,447.3 267.5,464.4" fill="none" stroke="#E5DCA2" stroke-width="1.6" stroke-linejoin="round"/><polyline points="195.0,542.3 206.5,544.3" fill="none" stroke="#E5DCA2" stroke-width="1.6" stroke-linejoin="round"/><polyline points="646.6,381.2 644.5,415.4 627.4,430.3" fill="none" stroke="#E5DCA2" stroke-width="1.6" stroke-linejoin="round"/><polyline points="625.0,537.5 642.4,539.5 668.0,537.5" fill="none" stroke="#E5DCA2" stroke-width="1.6" stroke-linejoin="round"/><polyline points="621.0,494.0 626.0,505.0 622.0,516.0" fill="none" stroke="#E5DCA2" stroke-width="1.6" stroke-linejoin="round"/><polyline points="627.0,390.0 640.0,398.0 652.0,392.0" fill="none" stroke="#E5DCA2" stroke-width="1.6" stroke-linejoin="round"/><polyline points="98.6,232.0 104.0,247.0 108.2,259.7 106.1,267.2 105.0,274.6 112.5,282.0 120.0,288.5 131.7,298.0 139.1,311.0 139.1,332.2 144.5,336.5 148.7,352.8 157.3,363.5 160.5,372.0 160.5,382.6 162.6,385.8" fill="none" stroke="#EEA93A" stroke-width="2.2" stroke-linejoin="round" stroke-linecap="round"/><polyline points="136.0,232.0 138.0,237.0 148.7,244.5 162.0,252.5 178.6,259.5 196.0,268.5 205.0,277.5 213.1,285.3 220.6,296.0 227.0,304.5 230.2,317.3 229.1,328.0 230.2,338.6 237.6,347.1 246.2,353.5 256.8,377.0 263.2,387.6 265.4,402.6 271.8,406.8 284.6,411.1 291.0,421.8 293.0,430.3 288.8,445.2 289.0,464.6 294.8,474.2 293.8,491.5 300.6,503.0 302.5,514.5 317.8,522.2 321.7,527.9 315.9,537.5 310.2,547.1 308.2,563.0" fill="none" stroke="#EEA93A" stroke-width="2.7" stroke-linejoin="round" stroke-linecap="round"/><polyline points="185.0,243.7 187.1,252.3 190.0,262.0" fill="none" stroke="#EEA93A" stroke-width="2.2" stroke-linejoin="round" stroke-linecap="round"/><polyline points="195.0,234.0 201.4,237.3 207.8,244.8 210.0,257.6 212.0,270.0" fill="none" stroke="#EEA93A" stroke-width="2.2" stroke-linejoin="round" stroke-linecap="round"/><polyline points="231.2,308.8 244.0,305.6 256.8,309.8 267.5,316.2 278.2,321.6 284.6,330.0 295.2,336.5 303.7,339.7 314.4,332.2 323.0,323.7 333.6,321.6 350.0,323.7 371.3,321.6 388.4,317.3 401.2,319.4 407.6,325.8 405.4,334.3 409.7,347.1 416.1,345.0 422.5,357.8 431.0,370.6 437.4,385.5 438.5,400.4 437.4,411.1 443.8,426.0 447.0,438.8 448.1,465.0" fill="none" stroke="#EEA93A" stroke-width="2.7" stroke-linejoin="round" stroke-linecap="round"/><polyline points="409.7,232.0 416.1,242.7 422.5,249.0 431.0,244.8 434.2,236.3 435.3,232.0" fill="none" stroke="#EEA93A" stroke-width="2.2" stroke-linejoin="round" stroke-linecap="round"/><polyline points="431.0,244.8 426.8,259.7 424.6,274.6 424.6,283.2 439.6,282.1 450.2,281.0" fill="none" stroke="#EEA93A" stroke-width="2.2" stroke-linejoin="round" stroke-linecap="round"/><polyline points="434.2,240.5 450.2,242.7 448.1,253.3 443.8,266.1 439.6,281.0 437.4,300.2 436.4,317.3" fill="none" stroke="#EEA93A" stroke-width="2.2" stroke-linejoin="round" stroke-linecap="round"/><polyline points="450.2,242.7 460.9,251.2 469.4,261.9 477.9,267.2 488.6,268.2 499.3,276.8 508.0,287.4 518.7,291.7 525.0,296.0 531.5,304.5 542.1,312.0 561.3,314.1 580.5,314.1 593.3,310.9 608.2,307.7 623.1,308.8 635.9,313.0 653.0,312.0 668.0,310.9" fill="none" stroke="#EEA93A" stroke-width="2.7" stroke-linejoin="round" stroke-linecap="round"/><polyline points="407.6,321.6 420.4,317.3 436.4,319.4 456.6,317.3 477.9,312.0 499.3,305.6 508.0,303.4 520.8,300.2 525.0,296.0" fill="none" stroke="#EEA93A" stroke-width="2.2" stroke-linejoin="round" stroke-linecap="round"/><polyline points="448.1,281.0 456.6,293.8 467.3,308.8 475.8,321.6" fill="none" stroke="#EEA93A" stroke-width="2.2" stroke-linejoin="round" stroke-linecap="round"/><polyline points="535.7,232.0 529.3,249.0 522.9,274.6 518.7,287.4" fill="none" stroke="#EEA93A" stroke-width="2.2" stroke-linejoin="round" stroke-linecap="round"/><polyline points="610.3,305.6 614.6,296.0 618.9,287.4 627.4,276.8 640.2,266.1 657.3,256.5 665.8,252.3 665.8,240.5 666.0,232.0" fill="none" stroke="#EEA93A" stroke-width="2.2" stroke-linejoin="round" stroke-linecap="round"/><polyline points="612.5,310.9 614.6,321.6 618.9,332.2 621.0,342.9 624.2,352.0 631.7,353.5 640.2,364.2 646.6,377.0 644.5,391.9 640.2,406.8 635.9,421.8 633.8,434.6 635.9,445.2 638.1,465.0" fill="none" stroke="#EEA93A" stroke-width="2.2" stroke-linejoin="round" stroke-linecap="round"/><polyline points="646.6,377.0 657.3,377.0 668.0,379.1" fill="none" stroke="#EEA93A" stroke-width="2.2" stroke-linejoin="round" stroke-linecap="round"/><polyline points="650.9,394.0 655.1,409.0 657.3,421.8 655.1,434.6 653.0,447.3 646.2,455.0 632.8,462.7 627.0,478.0 621.2,493.4 623.2,503.0 617.4,514.5 617.4,531.8 615.5,547.1 615.5,563.0" fill="none" stroke="#EEA93A" stroke-width="2.2" stroke-linejoin="round" stroke-linecap="round"/><polyline points="584.8,365.3 599.7,365.3 614.6,369.5 635.9,372.7 646.6,377.0" fill="none" stroke="#EEA93A" stroke-width="2.2" stroke-linejoin="round" stroke-linecap="round"/><polyline points="572.0,430.3 601.8,426.0 614.6,432.4 627.4,441.0 635.9,445.2 648.7,441.0 668.0,438.8" fill="none" stroke="#EEA93A" stroke-width="2.2" stroke-linejoin="round" stroke-linecap="round"/><polyline points="529.3,438.8 552.8,436.7 561.3,441.0 559.2,445.2" fill="none" stroke="#EEA93A" stroke-width="2.2" stroke-linejoin="round" stroke-linecap="round"/><polyline points="533.0,440.0 533.0,455.0 536.8,466.5 543.5,478.0 543.5,487.6" fill="none" stroke="#EEA93A" stroke-width="2.2" stroke-linejoin="round" stroke-linecap="round"/><polyline points="508.0,484.8 527.2,483.8 540.6,486.7 544.5,491.5 554.1,501.1 561.7,508.7 565.6,514.5 567.5,522.2 565.6,535.6 575.2,547.1 594.4,554.8" fill="none" stroke="#EEA93A" stroke-width="2.2" stroke-linejoin="round" stroke-linecap="round"/><polyline points="565.6,514.5 571.3,504.9 577.1,506.8 586.7,512.6 592.5,522.2 600.1,531.8 602.0,545.2 596.3,554.8 592.5,563.0" fill="none" stroke="#EEA93A" stroke-width="2.2" stroke-linejoin="round" stroke-linecap="round"/><polyline points="584.8,510.7 598.2,508.7 613.6,516.4 627.0,508.7" fill="none" stroke="#EEA93A" stroke-width="2.2" stroke-linejoin="round" stroke-linecap="round"/><polyline points="634.7,537.5 648.1,524.1 661.6,520.3 668.0,519.3" fill="none" stroke="#EEA93A" stroke-width="2.2" stroke-linejoin="round" stroke-linecap="round"/><polyline points="609.7,551.0 623.2,545.2 642.4,547.1 668.0,545.2" fill="none" stroke="#EEA93A" stroke-width="2.2" stroke-linejoin="round" stroke-linecap="round"/><polyline points="661.6,495.3 663.5,541.4 661.6,563.0" fill="none" stroke="#EEA93A" stroke-width="2.2" stroke-linejoin="round" stroke-linecap="round"/><polyline points="350.0,462.7 369.2,459.8 394.1,457.9 405.7,464.6 417.2,470.4 434.5,466.5 447.9,465.6 465.2,468.4 484.4,474.2 508.0,484.8" fill="none" stroke="#EEA93A" stroke-width="2.2" stroke-linejoin="round" stroke-linecap="round"/><polyline points="350.0,522.2 359.6,529.9 378.8,532.7 392.2,537.5 407.6,547.1 411.4,554.8 409.5,563.0" fill="none" stroke="#EEA93A" stroke-width="2.2" stroke-linejoin="round" stroke-linecap="round"/><polyline points="426.8,554.8 438.3,558.6" fill="none" stroke="#EEA93A" stroke-width="2.2" stroke-linejoin="round" stroke-linecap="round"/><polyline points="480.5,508.7 484.4,520.3 492.0,529.9 501.6,539.5 510.0,547.1 515.0,560.0" fill="none" stroke="#EEA93A" stroke-width="2.2" stroke-linejoin="round" stroke-linecap="round"/><polyline points="350.0,363.1 377.7,361.0 392.6,355.7 414.0,348.2" fill="none" stroke="#EEA93A" stroke-width="2.2" stroke-linejoin="round" stroke-linecap="round"/><polyline points="407.6,388.7 414.0,394.0 426.8,400.4 436.4,404.7" fill="none" stroke="#EEA93A" stroke-width="2.2" stroke-linejoin="round" stroke-linecap="round"/><polyline points="418.2,438.8 431.0,434.6 444.9,432.4" fill="none" stroke="#EEA93A" stroke-width="2.2" stroke-linejoin="round" stroke-linecap="round"/><polyline points="448.1,449.5 469.4,446.3" fill="none" stroke="#EEA93A" stroke-width="2.2" stroke-linejoin="round" stroke-linecap="round"/><polyline points="350.0,462.3 371.3,460.1 392.6,458.0 401.2,462.3" fill="none" stroke="#EEA93A" stroke-width="2.2" stroke-linejoin="round" stroke-linecap="round"/><polyline points="195.0,396.2 212.0,400.4 224.9,406.8 237.6,413.2 250.4,419.6 265.4,426.0 280.3,430.3 291.0,432.4" fill="none" stroke="#EEA93A" stroke-width="2.2" stroke-linejoin="round" stroke-linecap="round"/><polyline points="293.0,421.8 308.0,406.8 314.4,396.2 331.5,383.4 344.3,379.1 355.0,374.9" fill="none" stroke="#EEA93A" stroke-width="2.2" stroke-linejoin="round" stroke-linecap="round"/><polyline points="295.2,432.4 310.1,441.0 322.9,451.6 333.6,460.1 344.3,465.0 348.6,493.4 352.4,504.9 356.0,512.0" fill="none" stroke="#EEA93A" stroke-width="2.2" stroke-linejoin="round" stroke-linecap="round"/><polyline points="300.6,503.0 310.2,503.0 325.5,506.8 340.9,510.7 355.0,512.6" fill="none" stroke="#EEA93A" stroke-width="2.2" stroke-linejoin="round" stroke-linecap="round"/><polyline points="195.0,552.9 206.5,537.5 212.3,528.0 226.7,524.1 230.5,518.3 229.5,503.0 224.8,489.5 229.5,483.8 243.0,478.0 252.6,469.4 254.5,476.1 266.0,478.0 277.5,475.2 289.0,468.4" fill="none" stroke="#EEA93A" stroke-width="2.2" stroke-linejoin="round" stroke-linecap="round"/><polyline points="129.6,381.6 144.5,384.8 162.6,385.8 172.2,391.2 181.8,395.4 200.0,396.5" fill="none" stroke="#EEA93A" stroke-width="2.2" stroke-linejoin="round" stroke-linecap="round"/><polyline points="129.6,381.6 127.4,389.0 121.0,399.7 104.0,406.0 89.0,410.4 82.6,423.2 72.0,429.6 57.0,440.2 40.0,448.7" fill="none" stroke="#EEA93A" stroke-width="2.2" stroke-linejoin="round" stroke-linecap="round"/><polyline points="40.0,400.8 61.3,406.0 82.6,410.4" fill="none" stroke="#EEA93A" stroke-width="2.2" stroke-linejoin="round" stroke-linecap="round"/><polyline points="181.8,395.4 176.5,401.8 174.3,414.6 173.3,429.6 178.6,440.2 180.7,460.0 180.1,468.4" fill="none" stroke="#EEA93A" stroke-width="2.2" stroke-linejoin="round" stroke-linecap="round"/><polyline points="634.7,455.0 633.7,466.5 630.0,474.0" fill="none" stroke="#EEA93A" stroke-width="2.2" stroke-linejoin="round" stroke-linecap="round"/><polyline points="600.0,493.0 612.0,500.0 627.0,506.8 640.0,500.0 653.0,490.0" fill="none" stroke="#EEA93A" stroke-width="2.2" stroke-linejoin="round" stroke-linecap="round"/><polyline points="586.7,512.6 592.0,530.0 600.0,545.0 606.0,563.0" fill="none" stroke="#EEA93A" stroke-width="2.2" stroke-linejoin="round" stroke-linecap="round"/><polyline points="555.0,548.0 575.2,547.1 590.0,556.0 600.0,563.0" fill="none" stroke="#EEA93A" stroke-width="2.2" stroke-linejoin="round" stroke-linecap="round"/><polyline points="641.0,524.0 648.0,540.0 655.0,563.0" fill="none" stroke="#EEA93A" stroke-width="2.2" stroke-linejoin="round" stroke-linecap="round"/><polyline points="617.4,531.8 632.0,528.0 648.1,524.1" fill="none" stroke="#EEA93A" stroke-width="2.2" stroke-linejoin="round" stroke-linecap="round"/><polyline points="444.0,246.0 456.0,262.0 466.0,275.0 474.0,290.0 478.0,305.0" fill="none" stroke="#EEA93A" stroke-width="2.2" stroke-linejoin="round" stroke-linecap="round"/><polyline points="415.0,270.0 428.0,262.0 440.0,258.0" fill="none" stroke="#EEA93A" stroke-width="2.2" stroke-linejoin="round" stroke-linecap="round"/><g font-family="Liberation Sans" font-size="6.6" fill="#3E3E44" stroke="#fff" stroke-width="1.4" stroke-opacity=".75" paint-order="stroke" stroke-linejoin="round"><circle cx="64.5" cy="261.9" r="1.2" fill="#fff" stroke="#777" stroke-width=".6"/><text x="68.0" y="264.4">祁连县</text><circle cx="173.9" cy="256" r="1.2" fill="#fff" stroke="#777" stroke-width=".6"/><text x="177.4" y="258.5">永昌县</text><text x="40" y="303.8">海北藏族自治州</text><circle cx="111.4" cy="364.5" r="1.2" fill="#fff" stroke="#777" stroke-width=".6"/><text x="114.9" y="367.0">海晏县</text><circle cx="148.7" cy="395.9" r="1.2" fill="#fff" stroke="#777" stroke-width=".6"/><text x="152.2" y="398.4">湟中县</text><text x="78.4" y="421.0">共和县</text><text x="41" y="440.2">海南藏族自治州</text><text x="120.6" y="525.6">黄南藏族自治州</text><text x="54.4" y="550.6">玛沁县</text><text x="221.9" y="459.8">临夏回族自治州</text><circle cx="254.9" cy="465.6" r="1.2" fill="#fff" stroke="#777" stroke-width=".6"/><text x="258.4" y="468.1">临夏</text><circle cx="234.3" cy="512.6" r="1.2" fill="#fff" stroke="#777" stroke-width=".6"/><text x="237.8" y="515.1">合作</text><text x="208.4" y="534.3">甘南藏族自治州</text><circle cx="206.9" cy="544.3" r="1.2" fill="#fff" stroke="#777" stroke-width=".6"/><text x="210.4" y="546.8">碌曲县</text><circle cx="305.4" cy="556.3" r="1.2" fill="#fff" stroke="#777" stroke-width=".6"/><text x="308.9" y="558.8">岷县</text><circle cx="257.9" cy="437.7" r="1.2" fill="#fff" stroke="#777" stroke-width=".6"/><text x="261.4" y="440.2">永靖县</text><circle cx="443.8" cy="235.8" r="1.5" fill="none" stroke="#D9444A" stroke-width="1"/><text x="447.3" y="238.6" font-size="7.6" fill="#333">银川</text><circle cx="452.3" cy="267.2" r="1.2" fill="#fff" stroke="#777" stroke-width=".6"/><text x="455.8" y="269.7">灵武</text><circle cx="442.1" cy="275.7" r="1.5" fill="none" stroke="#D9444A" stroke-width="1"/><text x="445.6" y="278.5" font-size="7.6" fill="#333">吴忠</text><circle cx="378.8" cy="315.6" r="1.5" fill="none" stroke="#D9444A" stroke-width="1"/><text x="382.3" y="318.4" font-size="7.6" fill="#333">中卫</text><circle cx="410.3" cy="316.9" r="1.2" fill="#fff" stroke="#777" stroke-width=".6"/><text x="413.8" y="319.4">中宁县</text><circle cx="524.6" cy="261.2" r="1.2" fill="#fff" stroke="#777" stroke-width=".6"/><text x="528.1" y="263.7">鄂托克前旗</text><circle cx="520.8" cy="293.8" r="1.2" fill="#fff" stroke="#777" stroke-width=".6"/><text x="524.3" y="296.3">盐池县</text><circle cx="607.8" cy="307.7" r="1.2" fill="#fff" stroke="#777" stroke-width=".6"/><text x="611.3" y="310.2">靖边县</text><circle cx="568.8" cy="361.6" r="1.2" fill="#fff" stroke="#777" stroke-width=".6"/><text x="572.3" y="364.1">吴起县</text><circle cx="607.1" cy="370.2" r="1.2" fill="#fff" stroke="#777" stroke-width=".6"/><text x="610.6" y="372.7">志丹县</text><circle cx="653" cy="389.1" r="1.5" fill="none" stroke="#D9444A" stroke-width="1"/><text x="656.5" y="391.9" font-size="7.6" fill="#333">延安</text><circle cx="446" cy="432" r="1.5" fill="none" stroke="#D9444A" stroke-width="1"/><text x="449.5" y="434.8" font-size="7.6" fill="#333">固原</text><circle cx="550.2" cy="434.1" r="1.2" fill="#fff" stroke="#777" stroke-width=".6"/><text x="553.7" y="436.6">庆城县</text><circle cx="534.9" cy="457.3" r="1.5" fill="none" stroke="#D9444A" stroke-width="1"/><text x="538.4" y="460.1" font-size="7.6" fill="#333">庆阳</text><circle cx="553.1" cy="473.8" r="1.2" fill="#fff" stroke="#777" stroke-width=".6"/><text x="556.6" y="476.3">宁县</text><circle cx="471.9" cy="496.3" r="1.2" fill="#fff" stroke="#777" stroke-width=".6"/><text x="475.4" y="498.8">华亭县</text><circle cx="502.8" cy="540.3" r="1.2" fill="#fff" stroke="#777" stroke-width=".6"/><text x="506.3" y="542.8">千阳县</text><circle cx="509" cy="560.6" r="1.5" fill="none" stroke="#D9444A" stroke-width="1"/><text x="512.5" y="563.4" font-size="7.6" fill="#333">宝鸡</text><circle cx="646.2" cy="436.3" r="1.2" fill="#fff" stroke="#777" stroke-width=".6"/><text x="649.7" y="438.8">富县</text><circle cx="617.8" cy="521.2" r="1.5" fill="none" stroke="#D9444A" stroke-width="1"/><text x="621.3" y="524.0" font-size="7.6" fill="#333">铜川</text><circle cx="611.6" cy="549.4" r="1.2" fill="#fff" stroke="#777" stroke-width=".6"/><text x="615.1" y="551.9">泾阳县</text><circle cx="653.9" cy="551" r="1.5" fill="none" stroke="#D9444A" stroke-width="1"/><text x="657.4" y="553.8" font-size="7.6" fill="#333">渭南</text><circle cx="161.1" cy="385.4" r="1.6" fill="none" stroke="#D9444A" stroke-width="1"/><text x="142.5" y="390.0" font-size="7.6" fill="#333">西宁</text><circle cx="181.8" cy="395.4" r="1.5" fill="none" stroke="#D9444A" stroke-width="1"/><text x="185.3" y="398.2" font-size="7.6" fill="#333">海东</text><text x="224.5" y="285.0">武威</text><text x="349" y="470.3">定西</text><text x="483.4" y="473.2">凉</text></g><rect x="237.6" y="300.2" width="19.2" height="9.6" rx="1" fill="#5E9A3E"/><rect x="237.6" y="300.2" width="19.2" height="1.3" fill="#D94848"/><text x="247.2" y="307.2" text-anchor="middle" font-family="Liberation Sans" font-size="6" font-weight="bold" fill="#fff">G2012</text><rect x="269.2" y="317.3" width="19.2" height="8.5" rx="1" fill="#5E9A3E"/><rect x="269.2" y="317.3" width="19.2" height="1.3" fill="#D94848"/><text x="278.8" y="323.8" text-anchor="middle" font-family="Liberation Sans" font-size="6" font-weight="bold" fill="#fff">G2012</text><rect x="224.9" y="316.2" width="12.7" height="6.4" rx="1" fill="#5E9A3E"/><rect x="224.9" y="316.2" width="12.7" height="1.3" fill="#D94848"/><text x="231.2" y="321.6" text-anchor="middle" font-family="Liberation Sans" font-size="6" font-weight="bold" fill="#fff">G30</text><rect x="350" y="316.2" width="15.0" height="9.6" rx="1" fill="#5E9A3E"/><rect x="350" y="316.2" width="15.0" height="1.3" fill="#D94848"/><text x="357.5" y="323.2" text-anchor="middle" font-family="Liberation Sans" font-size="6" font-weight="bold" fill="#fff">G2012</text><rect x="475.8" y="261.9" width="13.9" height="9.5" rx="1" fill="#5E9A3E"/><rect x="475.8" y="261.9" width="13.9" height="1.3" fill="#D94848"/><text x="482.8" y="268.8" text-anchor="middle" font-family="Liberation Sans" font-size="6" font-weight="bold" fill="#fff">G20</text><rect x="407.6" y="338.6" width="10.6" height="8.5" rx="1" fill="#5E9A3E"/><rect x="407.6" y="338.6" width="10.6" height="1.3" fill="#D94848"/><text x="412.9" y="345.1" text-anchor="middle" font-family="Liberation Sans" font-size="6" font-weight="bold" fill="#fff">G6</text><rect x="527.2" y="303.4" width="13.8" height="9.6" rx="1" fill="#5E9A3E"/><rect x="527.2" y="303.4" width="13.8" height="1.3" fill="#D94848"/><text x="534.1" y="310.4" text-anchor="middle" font-family="Liberation Sans" font-size="6" font-weight="bold" fill="#fff">G20</text><rect x="564.5" y="309.8" width="13.5" height="9.6" rx="1" fill="#5E9A3E"/><rect x="564.5" y="309.8" width="13.5" height="1.3" fill="#D94848"/><text x="571.2" y="316.8" text-anchor="middle" font-family="Liberation Sans" font-size="6" font-weight="bold" fill="#fff">G20</text><rect x="615.7" y="289.1" width="12.8" height="10.1" rx="1" fill="#5E9A3E"/><rect x="615.7" y="289.1" width="12.8" height="1.3" fill="#D94848"/><text x="622.1" y="296.3" text-anchor="middle" font-family="Liberation Sans" font-size="6" font-weight="bold" fill="#fff">G65</text><rect x="658.3" y="236.3" width="9.7" height="9.6" rx="1" fill="#5E9A3E"/><rect x="658.3" y="236.3" width="9.7" height="1.3" fill="#D94848"/><text x="663.1" y="243.3" text-anchor="middle" font-family="Liberation Sans" font-size="6" font-weight="bold" fill="#fff">G65</text><rect x="529.3" y="438.8" width="13.9" height="8.5" rx="1" fill="#5E9A3E"/><rect x="529.3" y="438.8" width="13.9" height="1.3" fill="#D94848"/><text x="536.2" y="445.2" text-anchor="middle" font-family="Liberation Sans" font-size="6" font-weight="bold" fill="#fff">G22</text><rect x="648.7" y="420.7" width="13.3" height="9.6" rx="1" fill="#5E9A3E"/><rect x="648.7" y="420.7" width="13.3" height="1.3" fill="#D94848"/><text x="655.4" y="427.7" text-anchor="middle" font-family="Liberation Sans" font-size="6" font-weight="bold" fill="#fff">G65</text><rect x="624.1" y="471.3" width="13.5" height="8.7" rx="1" fill="#5E9A3E"/><rect x="624.1" y="471.3" width="13.5" height="1.3" fill="#D94848"/><text x="630.9" y="477.8" text-anchor="middle" font-family="Liberation Sans" font-size="6" font-weight="bold" fill="#fff">G65</text><rect x="557.5" y="522.2" width="12.9" height="9.6" rx="1" fill="#5E9A3E"/><rect x="557.5" y="522.2" width="12.9" height="1.3" fill="#D94848"/><text x="564.0" y="529.2" text-anchor="middle" font-family="Liberation Sans" font-size="6" font-weight="bold" fill="#fff">G70</text><rect x="381.7" y="498.2" width="14.3" height="5.8" rx="1" fill="#D9664A"/><text x="388.9" y="503.3" text-anchor="middle" font-family="Liberation Sans" font-size="6" font-weight="bold" fill="#fff">G045</text><rect x="383.6" y="538.5" width="13.4" height="6.7" rx="1" fill="#5E9A3E"/><rect x="383.6" y="538.5" width="13.4" height="1.3" fill="#D94848"/><text x="390.3" y="544.1" text-anchor="middle" font-family="Liberation Sans" font-size="6" font-weight="bold" fill="#fff">G30</text><rect x="292.9" y="494.3" width="13.1" height="7.7" rx="1" fill="#5E9A3E"/><rect x="292.9" y="494.3" width="13.1" height="1.3" fill="#D94848"/><text x="299.4" y="500.3" text-anchor="middle" font-family="Liberation Sans" font-size="6" font-weight="bold" fill="#fff">S14</text><rect x="214.2" y="401.5" width="9.6" height="7.5" rx="1" fill="#5E9A3E"/><rect x="214.2" y="401.5" width="9.6" height="1.3" fill="#D94848"/><text x="219.0" y="407.4" text-anchor="middle" font-family="Liberation Sans" font-size="6" font-weight="bold" fill="#fff">G30</text><rect x="264.3" y="400.4" width="12.8" height="7.5" rx="1" fill="#5E9A3E"/><rect x="264.3" y="400.4" width="12.8" height="1.3" fill="#D94848"/><text x="270.7" y="406.3" text-anchor="middle" font-family="Liberation Sans" font-size="6" font-weight="bold" fill="#fff">G30</text><rect x="350" y="510.7" width="4.0" height="6.7" rx="1" fill="#5E9A3E"/><rect x="350" y="510.7" width="4.0" height="1.3" fill="#D94848"/><text x="352.0" y="516.2" text-anchor="middle" font-family="Liberation Sans" font-size="6" font-weight="bold" fill="#fff">G</text><g transform="translate(174.4,237.6)"><path d="M0,10.8 L-5.2,4.6 A7.2,7.2 0 1 1 5.2,4.6 Z" fill="#0B3FA8" stroke="#fff" stroke-opacity=".6" stroke-width=".6"/><circle r="4.5" fill="#fff"/><path d="M-2.2,-1.2 Q-2.6,-3 -0.8,-2.8 L0.6,-1.4 M1.6,-3 L1.6,0.6 Q1.2,2.4 -0.8,1.8" fill="none" stroke="#6D8FD8" stroke-width=".75"/></g><g transform="translate(183.5,233.5)"><path d="M0,10.8 L-5.2,4.6 A7.2,7.2 0 1 1 5.2,4.6 Z" fill="#0B3FA8" stroke="#fff" stroke-opacity=".6" stroke-width=".6"/><circle r="4.5" fill="#fff"/><path d="M-2.2,-1.2 Q-2.6,-3 -0.8,-2.8 L0.6,-1.4 M1.6,-3 L1.6,0.6 Q1.2,2.4 -0.8,1.8" fill="none" stroke="#6D8FD8" stroke-width=".75"/></g><g transform="translate(191,234)"><path d="M0,10.8 L-5.2,4.6 A7.2,7.2 0 1 1 5.2,4.6 Z" fill="#0B3FA8" stroke="#fff" stroke-opacity=".6" stroke-width=".6"/><circle r="4.5" fill="#fff"/><path d="M-2.2,-1.2 Q-2.6,-3 -0.8,-2.8 L0.6,-1.4 M1.6,-3 L1.6,0.6 Q1.2,2.4 -0.8,1.8" fill="none" stroke="#6D8FD8" stroke-width=".75"/></g><g transform="translate(202.5,261.9)"><path d="M0,10.8 L-5.2,4.6 A7.2,7.2 0 1 1 5.2,4.6 Z" fill="#0B3FA8" stroke="#fff" stroke-opacity=".6" stroke-width=".6"/><circle r="4.5" fill="#fff"/><path d="M-2.2,-1.2 Q-2.6,-3 -0.8,-2.8 L0.6,-1.4 M1.6,-3 L1.6,0.6 Q1.2,2.4 -0.8,1.8" fill="none" stroke="#6D8FD8" stroke-width=".75"/></g><g transform="translate(207.8,266.1)"><path d="M0,10.8 L-5.2,4.6 A7.2,7.2 0 1 1 5.2,4.6 Z" fill="#0B3FA8" stroke="#fff" stroke-opacity=".6" stroke-width=".6"/><circle r="4.5" fill="#fff"/><path d="M-2.2,-1.2 Q-2.6,-3 -0.8,-2.8 L0.6,-1.4 M1.6,-3 L1.6,0.6 Q1.2,2.4 -0.8,1.8" fill="none" stroke="#6D8FD8" stroke-width=".75"/></g><g transform="translate(218.5,285.3)"><path d="M0,10.8 L-5.2,4.6 A7.2,7.2 0 1 1 5.2,4.6 Z" fill="#0B3FA8" stroke="#fff" stroke-opacity=".6" stroke-width=".6"/><circle r="4.5" fill="#fff"/><path d="M-2.2,-1.2 Q-2.6,-3 -0.8,-2.8 L0.6,-1.4 M1.6,-3 L1.6,0.6 Q1.2,2.4 -0.8,1.8" fill="none" stroke="#6D8FD8" stroke-width=".75"/></g><g transform="translate(231.5,309.8)"><path d="M0,10.8 L-5.2,4.6 A7.2,7.2 0 1 1 5.2,4.6 Z" fill="#C25A1F" stroke="#fff" stroke-opacity=".6" stroke-width=".6"/><circle r="4.5" fill="#fff"/><path d="M-2.2,-1.2 Q-2.6,-3 -0.8,-2.8 L0.6,-1.4 M1.6,-3 L1.6,0.6 Q1.2,2.4 -0.8,1.8" fill="none" stroke="#6D8FD8" stroke-width=".75"/></g><g transform="translate(305.9,331.1)"><path d="M0,10.8 L-5.2,4.6 A7.2,7.2 0 1 1 5.2,4.6 Z" fill="#0B3FA8" stroke="#fff" stroke-opacity=".6" stroke-width=".6"/><circle r="4.5" fill="#fff"/><path d="M-2.2,-1.2 Q-2.6,-3 -0.8,-2.8 L0.6,-1.4 M1.6,-3 L1.6,0.6 Q1.2,2.4 -0.8,1.8" fill="none" stroke="#6D8FD8" stroke-width=".75"/></g><g transform="translate(301.6,347.1)"><path d="M0,10.8 L-5.2,4.6 A7.2,7.2 0 1 1 5.2,4.6 Z" fill="#0B3FA8" stroke="#fff" stroke-opacity=".6" stroke-width=".6"/><circle r="4.5" fill="#fff"/><path d="M-2.2,-1.2 Q-2.6,-3 -0.8,-2.8 L0.6,-1.4 M1.6,-3 L1.6,0.6 Q1.2,2.4 -0.8,1.8" fill="none" stroke="#6D8FD8" stroke-width=".75"/></g><g transform="translate(353.8,357.8)"><path d="M0,10.8 L-5.2,4.6 A7.2,7.2 0 1 1 5.2,4.6 Z" fill="#0B3FA8" stroke="#fff" stroke-opacity=".6" stroke-width=".6"/><circle r="4.5" fill="#fff"/><path d="M-2.2,-1.2 Q-2.6,-3 -0.8,-2.8 L0.6,-1.4 M1.6,-3 L1.6,0.6 Q1.2,2.4 -0.8,1.8" fill="none" stroke="#6D8FD8" stroke-width=".75"/></g><g transform="translate(349.6,374.9)"><path d="M0,10.8 L-5.2,4.6 A7.2,7.2 0 1 1 5.2,4.6 Z" fill="#0B3FA8" stroke="#fff" stroke-opacity=".6" stroke-width=".6"/><circle r="4.5" fill="#fff"/><path d="M-2.2,-1.2 Q-2.6,-3 -0.8,-2.8 L0.6,-1.4 M1.6,-3 L1.6,0.6 Q1.2,2.4 -0.8,1.8" fill="none" stroke="#6D8FD8" stroke-width=".75"/></g><g transform="translate(249.4,363.1)"><path d="M0,10.8 L-5.2,4.6 A7.2,7.2 0 1 1 5.2,4.6 Z" fill="#0B3FA8" stroke="#fff" stroke-opacity=".6" stroke-width=".6"/><circle r="4.5" fill="#fff"/><path d="M-2.2,-1.2 Q-2.6,-3 -0.8,-2.8 L0.6,-1.4 M1.6,-3 L1.6,0.6 Q1.2,2.4 -0.8,1.8" fill="none" stroke="#6D8FD8" stroke-width=".75"/></g><g transform="translate(251.5,367.4)"><path d="M0,10.8 L-5.2,4.6 A7.2,7.2 0 1 1 5.2,4.6 Z" fill="#0B3FA8" stroke="#fff" stroke-opacity=".6" stroke-width=".6"/><circle r="4.5" fill="#fff"/><path d="M-2.2,-1.2 Q-2.6,-3 -0.8,-2.8 L0.6,-1.4 M1.6,-3 L1.6,0.6 Q1.2,2.4 -0.8,1.8" fill="none" stroke="#6D8FD8" stroke-width=".75"/></g><g transform="translate(270.7,379.1)"><path d="M0,10.8 L-5.2,4.6 A7.2,7.2 0 1 1 5.2,4.6 Z" fill="#0B3FA8" stroke="#fff" stroke-opacity=".6" stroke-width=".6"/><circle r="4.5" fill="#fff"/><path d="M-2.2,-1.2 Q-2.6,-3 -0.8,-2.8 L0.6,-1.4 M1.6,-3 L1.6,0.6 Q1.2,2.4 -0.8,1.8" fill="none" stroke="#6D8FD8" stroke-width=".75"/></g><g transform="translate(289.5,377)"><path d="M0,10.8 L-5.2,4.6 A7.2,7.2 0 1 1 5.2,4.6 Z" fill="#C25A1F" stroke="#fff" stroke-opacity=".6" stroke-width=".6"/><circle r="4.5" fill="#fff"/><path d="M-2.2,-1.2 Q-2.6,-3 -0.8,-2.8 L0.6,-1.4 M1.6,-3 L1.6,0.6 Q1.2,2.4 -0.8,1.8" fill="none" stroke="#6D8FD8" stroke-width=".75"/></g><g transform="translate(307,383)"><path d="M0,10.8 L-5.2,4.6 A7.2,7.2 0 1 1 5.2,4.6 Z" fill="#0B3FA8" stroke="#fff" stroke-opacity=".6" stroke-width=".6"/><circle r="4.5" fill="#fff"/><path d="M-2.2,-1.2 Q-2.6,-3 -0.8,-2.8 L0.6,-1.4 M1.6,-3 L1.6,0.6 Q1.2,2.4 -0.8,1.8" fill="none" stroke="#6D8FD8" stroke-width=".75"/></g><g transform="translate(314.4,384.4)"><path d="M0,10.8 L-5.2,4.6 A7.2,7.2 0 1 1 5.2,4.6 Z" fill="#0B3FA8" stroke="#fff" stroke-opacity=".6" stroke-width=".6"/><circle r="4.5" fill="#fff"/><path d="M-2.2,-1.2 Q-2.6,-3 -0.8,-2.8 L0.6,-1.4 M1.6,-3 L1.6,0.6 Q1.2,2.4 -0.8,1.8" fill="none" stroke="#6D8FD8" stroke-width=".75"/></g><g transform="translate(318.7,386.6)"><path d="M0,10.8 L-5.2,4.6 A7.2,7.2 0 1 1 5.2,4.6 Z" fill="#0B3FA8" stroke="#fff" stroke-opacity=".6" stroke-width=".6"/><circle r="4.5" fill="#fff"/><path d="M-2.2,-1.2 Q-2.6,-3 -0.8,-2.8 L0.6,-1.4 M1.6,-3 L1.6,0.6 Q1.2,2.4 -0.8,1.8" fill="none" stroke="#6D8FD8" stroke-width=".75"/></g><g transform="translate(229.1,390.8)"><path d="M0,10.8 L-5.2,4.6 A7.2,7.2 0 1 1 5.2,4.6 Z" fill="#0B3FA8" stroke="#fff" stroke-opacity=".6" stroke-width=".6"/><circle r="4.5" fill="#fff"/><path d="M-2.2,-1.2 Q-2.6,-3 -0.8,-2.8 L0.6,-1.4 M1.6,-3 L1.6,0.6 Q1.2,2.4 -0.8,1.8" fill="none" stroke="#6D8FD8" stroke-width=".75"/></g><g transform="translate(228,403.6)"><path d="M0,10.8 L-5.2,4.6 A7.2,7.2 0 1 1 5.2,4.6 Z" fill="#0B3FA8" stroke="#fff" stroke-opacity=".6" stroke-width=".6"/><circle r="4.5" fill="#fff"/><path d="M-2.2,-1.2 Q-2.6,-3 -0.8,-2.8 L0.6,-1.4 M1.6,-3 L1.6,0.6 Q1.2,2.4 -0.8,1.8" fill="none" stroke="#6D8FD8" stroke-width=".75"/></g><g transform="translate(293.5,399.4)"><path d="M0,10.8 L-5.2,4.6 A7.2,7.2 0 1 1 5.2,4.6 Z" fill="#0B3FA8" stroke="#fff" stroke-opacity=".6" stroke-width=".6"/><circle r="4.5" fill="#fff"/><path d="M-2.2,-1.2 Q-2.6,-3 -0.8,-2.8 L0.6,-1.4 M1.6,-3 L1.6,0.6 Q1.2,2.4 -0.8,1.8" fill="none" stroke="#6D8FD8" stroke-width=".75"/></g><g transform="translate(298.4,409)"><path d="M0,10.8 L-5.2,4.6 A7.2,7.2 0 1 1 5.2,4.6 Z" fill="#0B3FA8" stroke="#fff" stroke-opacity=".6" stroke-width=".6"/><circle r="4.5" fill="#fff"/><path d="M-2.2,-1.2 Q-2.6,-3 -0.8,-2.8 L0.6,-1.4 M1.6,-3 L1.6,0.6 Q1.2,2.4 -0.8,1.8" fill="none" stroke="#6D8FD8" stroke-width=".75"/></g><g transform="translate(275,410)"><path d="M0,10.8 L-5.2,4.6 A7.2,7.2 0 1 1 5.2,4.6 Z" fill="#0B3FA8" stroke="#fff" stroke-opacity=".6" stroke-width=".6"/><circle r="4.5" fill="#fff"/><path d="M-2.2,-1.2 Q-2.6,-3 -0.8,-2.8 L0.6,-1.4 M1.6,-3 L1.6,0.6 Q1.2,2.4 -0.8,1.8" fill="none" stroke="#6D8FD8" stroke-width=".75"/></g><g transform="translate(257.9,417.5)"><path d="M0,10.8 L-5.2,4.6 A7.2,7.2 0 1 1 5.2,4.6 Z" fill="#0B3FA8" stroke="#fff" stroke-opacity=".6" stroke-width=".6"/><circle r="4.5" fill="#fff"/><path d="M-2.2,-1.2 Q-2.6,-3 -0.8,-2.8 L0.6,-1.4 M1.6,-3 L1.6,0.6 Q1.2,2.4 -0.8,1.8" fill="none" stroke="#6D8FD8" stroke-width=".75"/></g><g transform="translate(261.1,421.8)"><path d="M0,10.8 L-5.2,4.6 A7.2,7.2 0 1 1 5.2,4.6 Z" fill="#0B3FA8" stroke="#fff" stroke-opacity=".6" stroke-width=".6"/><circle r="4.5" fill="#fff"/><path d="M-2.2,-1.2 Q-2.6,-3 -0.8,-2.8 L0.6,-1.4 M1.6,-3 L1.6,0.6 Q1.2,2.4 -0.8,1.8" fill="none" stroke="#6D8FD8" stroke-width=".75"/></g><g transform="translate(270.7,426)"><path d="M0,10.8 L-5.2,4.6 A7.2,7.2 0 1 1 5.2,4.6 Z" fill="#0B3FA8" stroke="#fff" stroke-opacity=".6" stroke-width=".6"/><circle r="4.5" fill="#fff"/><path d="M-2.2,-1.2 Q-2.6,-3 -0.8,-2.8 L0.6,-1.4 M1.6,-3 L1.6,0.6 Q1.2,2.4 -0.8,1.8" fill="none" stroke="#6D8FD8" stroke-width=".75"/></g><g transform="translate(303.7,428.2)"><path d="M0,10.8 L-5.2,4.6 A7.2,7.2 0 1 1 5.2,4.6 Z" fill="#C25A1F" stroke="#fff" stroke-opacity=".6" stroke-width=".6"/><circle r="4.5" fill="#fff"/><path d="M-2.2,-1.2 Q-2.6,-3 -0.8,-2.8 L0.6,-1.4 M1.6,-3 L1.6,0.6 Q1.2,2.4 -0.8,1.8" fill="none" stroke="#6D8FD8" stroke-width=".75"/></g><g transform="translate(282,447.3)"><path d="M0,10.8 L-5.2,4.6 A7.2,7.2 0 1 1 5.2,4.6 Z" fill="#C25A1F" stroke="#fff" stroke-opacity=".6" stroke-width=".6"/><circle r="4.5" fill="#fff"/><path d="M-2.2,-1.2 Q-2.6,-3 -0.8,-2.8 L0.6,-1.4 M1.6,-3 L1.6,0.6 Q1.2,2.4 -0.8,1.8" fill="none" stroke="#6D8FD8" stroke-width=".75"/></g><g transform="translate(340.3,465.6)"><path d="M0,10.8 L-5.2,4.6 A7.2,7.2 0 1 1 5.2,4.6 Z" fill="#0B3FA8" stroke="#fff" stroke-opacity=".6" stroke-width=".6"/><circle r="4.5" fill="#fff"/><path d="M-2.2,-1.2 Q-2.6,-3 -0.8,-2.8 L0.6,-1.4 M1.6,-3 L1.6,0.6 Q1.2,2.4 -0.8,1.8" fill="none" stroke="#6D8FD8" stroke-width=".75"/></g><g transform="translate(246.2,480.9)"><path d="M0,10.8 L-5.2,4.6 A7.2,7.2 0 1 1 5.2,4.6 Z" fill="#0B3FA8" stroke="#fff" stroke-opacity=".6" stroke-width=".6"/><circle r="4.5" fill="#fff"/><path d="M-2.2,-1.2 Q-2.6,-3 -0.8,-2.8 L0.6,-1.4 M1.6,-3 L1.6,0.6 Q1.2,2.4 -0.8,1.8" fill="none" stroke="#6D8FD8" stroke-width=".75"/></g><g transform="translate(258.7,486.7)"><path d="M0,10.8 L-5.2,4.6 A7.2,7.2 0 1 1 5.2,4.6 Z" fill="#0B3FA8" stroke="#fff" stroke-opacity=".6" stroke-width=".6"/><circle r="4.5" fill="#fff"/><path d="M-2.2,-1.2 Q-2.6,-3 -0.8,-2.8 L0.6,-1.4 M1.6,-3 L1.6,0.6 Q1.2,2.4 -0.8,1.8" fill="none" stroke="#6D8FD8" stroke-width=".75"/></g><g transform="translate(268.9,476.1)"><path d="M0,10.8 L-5.2,4.6 A7.2,7.2 0 1 1 5.2,4.6 Z" fill="#0B3FA8" stroke="#fff" stroke-opacity=".6" stroke-width=".6"/><circle r="4.5" fill="#fff"/><path d="M-2.2,-1.2 Q-2.6,-3 -0.8,-2.8 L0.6,-1.4 M1.6,-3 L1.6,0.6 Q1.2,2.4 -0.8,1.8" fill="none" stroke="#6D8FD8" stroke-width=".75"/></g><g transform="translate(226.3,510.7)"><path d="M0,10.8 L-5.2,4.6 A7.2,7.2 0 1 1 5.2,4.6 Z" fill="#0B3FA8" stroke="#fff" stroke-opacity=".6" stroke-width=".6"/><circle r="4.5" fill="#fff"/><path d="M-2.2,-1.2 Q-2.6,-3 -0.8,-2.8 L0.6,-1.4 M1.6,-3 L1.6,0.6 Q1.2,2.4 -0.8,1.8" fill="none" stroke="#6D8FD8" stroke-width=".75"/></g><g transform="translate(314.4,498.2)"><path d="M0,10.8 L-5.2,4.6 A7.2,7.2 0 1 1 5.2,4.6 Z" fill="#0B3FA8" stroke="#fff" stroke-opacity=".6" stroke-width=".6"/><circle r="4.5" fill="#fff"/><path d="M-2.2,-1.2 Q-2.6,-3 -0.8,-2.8 L0.6,-1.4 M1.6,-3 L1.6,0.6 Q1.2,2.4 -0.8,1.8" fill="none" stroke="#6D8FD8" stroke-width=".75"/></g><g transform="translate(332.8,508.7)"><path d="M0,10.8 L-5.2,4.6 A7.2,7.2 0 1 1 5.2,4.6 Z" fill="#0B3FA8" stroke="#fff" stroke-opacity=".6" stroke-width=".6"/><circle r="4.5" fill="#fff"/><path d="M-2.2,-1.2 Q-2.6,-3 -0.8,-2.8 L0.6,-1.4 M1.6,-3 L1.6,0.6 Q1.2,2.4 -0.8,1.8" fill="none" stroke="#6D8FD8" stroke-width=".75"/></g><g transform="translate(341.8,509.7)"><path d="M0,10.8 L-5.2,4.6 A7.2,7.2 0 1 1 5.2,4.6 Z" fill="#0B3FA8" stroke="#fff" stroke-opacity=".6" stroke-width=".6"/><circle r="4.5" fill="#fff"/><path d="M-2.2,-1.2 Q-2.6,-3 -0.8,-2.8 L0.6,-1.4 M1.6,-3 L1.6,0.6 Q1.2,2.4 -0.8,1.8" fill="none" stroke="#6D8FD8" stroke-width=".75"/></g><g transform="translate(363.4,456.9)"><path d="M0,10.8 L-5.2,4.6 A7.2,7.2 0 1 1 5.2,4.6 Z" fill="#0B3FA8" stroke="#fff" stroke-opacity=".6" stroke-width=".6"/><circle r="4.5" fill="#fff"/><path d="M-2.2,-1.2 Q-2.6,-3 -0.8,-2.8 L0.6,-1.4 M1.6,-3 L1.6,0.6 Q1.2,2.4 -0.8,1.8" fill="none" stroke="#6D8FD8" stroke-width=".75"/></g><g transform="translate(363.4,461.7)"><path d="M0,10.8 L-5.2,4.6 A7.2,7.2 0 1 1 5.2,4.6 Z" fill="#0B3FA8" stroke="#fff" stroke-opacity=".6" stroke-width=".6"/><circle r="4.5" fill="#fff"/><path d="M-2.2,-1.2 Q-2.6,-3 -0.8,-2.8 L0.6,-1.4 M1.6,-3 L1.6,0.6 Q1.2,2.4 -0.8,1.8" fill="none" stroke="#6D8FD8" stroke-width=".75"/></g><g transform="translate(386.1,475.2)"><path d="M0,10.8 L-5.2,4.6 A7.2,7.2 0 1 1 5.2,4.6 Z" fill="#0B3FA8" stroke="#fff" stroke-opacity=".6" stroke-width=".6"/><circle r="4.5" fill="#fff"/><path d="M-2.2,-1.2 Q-2.6,-3 -0.8,-2.8 L0.6,-1.4 M1.6,-3 L1.6,0.6 Q1.2,2.4 -0.8,1.8" fill="none" stroke="#6D8FD8" stroke-width=".75"/></g><g transform="translate(392.2,483.8)"><path d="M0,10.8 L-5.2,4.6 A7.2,7.2 0 1 1 5.2,4.6 Z" fill="#0B3FA8" stroke="#fff" stroke-opacity=".6" stroke-width=".6"/><circle r="4.5" fill="#fff"/><path d="M-2.2,-1.2 Q-2.6,-3 -0.8,-2.8 L0.6,-1.4 M1.6,-3 L1.6,0.6 Q1.2,2.4 -0.8,1.8" fill="none" stroke="#6D8FD8" stroke-width=".75"/></g><g transform="translate(427.7,496.3)"><path d="M0,10.8 L-5.2,4.6 A7.2,7.2 0 1 1 5.2,4.6 Z" fill="#0B3FA8" stroke="#fff" stroke-opacity=".6" stroke-width=".6"/><circle r="4.5" fill="#fff"/><path d="M-2.2,-1.2 Q-2.6,-3 -0.8,-2.8 L0.6,-1.4 M1.6,-3 L1.6,0.6 Q1.2,2.4 -0.8,1.8" fill="none" stroke="#6D8FD8" stroke-width=".75"/></g><g transform="translate(405.7,521.2)"><path d="M0,10.8 L-5.2,4.6 A7.2,7.2 0 1 1 5.2,4.6 Z" fill="#0B3FA8" stroke="#fff" stroke-opacity=".6" stroke-width=".6"/><circle r="4.5" fill="#fff"/><path d="M-2.2,-1.2 Q-2.6,-3 -0.8,-2.8 L0.6,-1.4 M1.6,-3 L1.6,0.6 Q1.2,2.4 -0.8,1.8" fill="none" stroke="#6D8FD8" stroke-width=".75"/></g><g transform="translate(392.2,528.9)"><path d="M0,10.8 L-5.2,4.6 A7.2,7.2 0 1 1 5.2,4.6 Z" fill="#0B3FA8" stroke="#fff" stroke-opacity=".6" stroke-width=".6"/><circle r="4.5" fill="#fff"/><path d="M-2.2,-1.2 Q-2.6,-3 -0.8,-2.8 L0.6,-1.4 M1.6,-3 L1.6,0.6 Q1.2,2.4 -0.8,1.8" fill="none" stroke="#6D8FD8" stroke-width=".75"/></g><g transform="translate(434.1,527)"><path d="M0,10.8 L-5.2,4.6 A7.2,7.2 0 1 1 5.2,4.6 Z" fill="#0B3FA8" stroke="#fff" stroke-opacity=".6" stroke-width=".6"/><circle r="4.5" fill="#fff"/><path d="M-2.2,-1.2 Q-2.6,-3 -0.8,-2.8 L0.6,-1.4 M1.6,-3 L1.6,0.6 Q1.2,2.4 -0.8,1.8" fill="none" stroke="#6D8FD8" stroke-width=".75"/></g><g transform="translate(407.2,541.4)"><path d="M0,10.8 L-5.2,4.6 A7.2,7.2 0 1 1 5.2,4.6 Z" fill="#0B3FA8" stroke="#fff" stroke-opacity=".6" stroke-width=".6"/><circle r="4.5" fill="#fff"/><path d="M-2.2,-1.2 Q-2.6,-3 -0.8,-2.8 L0.6,-1.4 M1.6,-3 L1.6,0.6 Q1.2,2.4 -0.8,1.8" fill="none" stroke="#6D8FD8" stroke-width=".75"/></g><g transform="translate(413.9,541.4)"><path d="M0,10.8 L-5.2,4.6 A7.2,7.2 0 1 1 5.2,4.6 Z" fill="#0B3FA8" stroke="#fff" stroke-opacity=".6" stroke-width=".6"/><circle r="4.5" fill="#fff"/><path d="M-2.2,-1.2 Q-2.6,-3 -0.8,-2.8 L0.6,-1.4 M1.6,-3 L1.6,0.6 Q1.2,2.4 -0.8,1.8" fill="none" stroke="#6D8FD8" stroke-width=".75"/></g><g transform="translate(426.8,542.3)"><path d="M0,10.8 L-5.2,4.6 A7.2,7.2 0 1 1 5.2,4.6 Z" fill="#0B3FA8" stroke="#fff" stroke-opacity=".6" stroke-width=".6"/><circle r="4.5" fill="#fff"/><path d="M-2.2,-1.2 Q-2.6,-3 -0.8,-2.8 L0.6,-1.4 M1.6,-3 L1.6,0.6 Q1.2,2.4 -0.8,1.8" fill="none" stroke="#6D8FD8" stroke-width=".75"/></g><g transform="translate(428.7,544.3)"><path d="M0,10.8 L-5.2,4.6 A7.2,7.2 0 1 1 5.2,4.6 Z" fill="#0B3FA8" stroke="#fff" stroke-opacity=".6" stroke-width=".6"/><circle r="4.5" fill="#fff"/><path d="M-2.2,-1.2 Q-2.6,-3 -0.8,-2.8 L0.6,-1.4 M1.6,-3 L1.6,0.6 Q1.2,2.4 -0.8,1.8" fill="none" stroke="#6D8FD8" stroke-width=".75"/></g><g transform="translate(388,553.8)"><path d="M0,10.8 L-5.2,4.6 A7.2,7.2 0 1 1 5.2,4.6 Z" fill="#0B3FA8" stroke="#fff" stroke-opacity=".6" stroke-width=".6"/><circle r="4.5" fill="#fff"/><path d="M-2.2,-1.2 Q-2.6,-3 -0.8,-2.8 L0.6,-1.4 M1.6,-3 L1.6,0.6 Q1.2,2.4 -0.8,1.8" fill="none" stroke="#6D8FD8" stroke-width=".75"/></g><g transform="translate(420,561.5)"><path d="M0,10.8 L-5.2,4.6 A7.2,7.2 0 1 1 5.2,4.6 Z" fill="#0B3FA8" stroke="#fff" stroke-opacity=".6" stroke-width=".6"/><circle r="4.5" fill="#fff"/><path d="M-2.2,-1.2 Q-2.6,-3 -0.8,-2.8 L0.6,-1.4 M1.6,-3 L1.6,0.6 Q1.2,2.4 -0.8,1.8" fill="none" stroke="#6D8FD8" stroke-width=".75"/></g><g transform="translate(470,471.3)"><path d="M0,10.8 L-5.2,4.6 A7.2,7.2 0 1 1 5.2,4.6 Z" fill="#0B3FA8" stroke="#fff" stroke-opacity=".6" stroke-width=".6"/><circle r="4.5" fill="#fff"/><path d="M-2.2,-1.2 Q-2.6,-3 -0.8,-2.8 L0.6,-1.4 M1.6,-3 L1.6,0.6 Q1.2,2.4 -0.8,1.8" fill="none" stroke="#6D8FD8" stroke-width=".75"/></g><g transform="translate(476.7,467.5)"><path d="M0,10.8 L-5.2,4.6 A7.2,7.2 0 1 1 5.2,4.6 Z" fill="#0B3FA8" stroke="#fff" stroke-opacity=".6" stroke-width=".6"/><circle r="4.5" fill="#fff"/><path d="M-2.2,-1.2 Q-2.6,-3 -0.8,-2.8 L0.6,-1.4 M1.6,-3 L1.6,0.6 Q1.2,2.4 -0.8,1.8" fill="none" stroke="#6D8FD8" stroke-width=".75"/></g><g transform="translate(500.5,366.5)"><path d="M0,10.8 L-5.2,4.6 A7.2,7.2 0 1 1 5.2,4.6 Z" fill="#0B3FA8" stroke="#fff" stroke-opacity=".6" stroke-width=".6"/><circle r="4.5" fill="#fff"/><path d="M-2.2,-1.2 Q-2.6,-3 -0.8,-2.8 L0.6,-1.4 M1.6,-3 L1.6,0.6 Q1.2,2.4 -0.8,1.8" fill="none" stroke="#6D8FD8" stroke-width=".75"/></g><g transform="translate(542.5,469)"><path d="M0,10.8 L-5.2,4.6 A7.2,7.2 0 1 1 5.2,4.6 Z" fill="#0B3FA8" stroke="#fff" stroke-opacity=".6" stroke-width=".6"/><circle r="4.5" fill="#fff"/><path d="M-2.2,-1.2 Q-2.6,-3 -0.8,-2.8 L0.6,-1.4 M1.6,-3 L1.6,0.6 Q1.2,2.4 -0.8,1.8" fill="none" stroke="#6D8FD8" stroke-width=".75"/></g><g transform="translate(580,469)"><path d="M0,10.8 L-5.2,4.6 A7.2,7.2 0 1 1 5.2,4.6 Z" fill="#0B3FA8" stroke="#fff" stroke-opacity=".6" stroke-width=".6"/><circle r="4.5" fill="#fff"/><path d="M-2.2,-1.2 Q-2.6,-3 -0.8,-2.8 L0.6,-1.4 M1.6,-3 L1.6,0.6 Q1.2,2.4 -0.8,1.8" fill="none" stroke="#6D8FD8" stroke-width=".75"/></g><g transform="translate(104.6,563)"><path d="M0,10.8 L-5.2,4.6 A7.2,7.2 0 1 1 5.2,4.6 Z" fill="#0B3FA8" stroke="#fff" stroke-opacity=".6" stroke-width=".6"/><circle r="4.5" fill="#fff"/><path d="M-2.2,-1.2 Q-2.6,-3 -0.8,-2.8 L0.6,-1.4 M1.6,-3 L1.6,0.6 Q1.2,2.4 -0.8,1.8" fill="none" stroke="#6D8FD8" stroke-width=".75"/></g></g></svg><!--/MAP-->
</div>
<!-- chart card -->
<div class="card" style="left:686px;top:207px;width:304.5px;height:177.5px">
  <div class="ttl">主要设施用电趋势</div>
  <div class="hl" style="top:23.8px"></div>
  <svg class="abs" style="left:-1px;top:-1px" width="304.5" height="177.5" viewBox="686 207 304.5 177.5">
    <defs><linearGradient id="ag" x1="0" y1="0" x2="0" y2="1"><stop offset="0" stop-color="#90C6FA"/><stop offset="1" stop-color="#CAE4FD"/></linearGradient></defs>
    <path d="M744.60,303.30 C744.60,303.30 748.58,289.01 751.95,289.01 C755.93,289.01 754.39,298.69 759.30,306.52 C761.74,310.42 762.56,312.47 766.65,312.47 C769.91,312.47 772.81,310.82 774.00,310.82 C780.16,310.82 778.70,349.06 781.35,349.06 C786.05,349.06 783.08,280.50 788.70,280.50 C790.43,280.50 792.42,300.49 796.05,300.49 C799.77,300.49 797.95,279.93 803.40,279.93 C805.30,279.93 809.06,279.93 810.75,281.99 C816.41,288.92 813.54,294.62 818.10,306.52 C820.89,313.82 821.99,313.36 825.45,320.40 C829.34,328.31 831.03,336.42 832.80,336.42 C838.38,336.42 836.29,281.33 840.15,281.33 C843.64,281.33 842.78,330.97 847.50,330.97 C850.13,330.97 849.13,304.05 854.85,304.05 C856.48,304.05 859.28,304.59 862.20,307.10 C866.63,310.91 865.60,316.68 869.55,316.68 C872.95,316.68 875.16,309.33 876.90,309.33 C882.51,309.33 878.59,342.12 884.25,342.12 C885.94,342.12 890.66,340.06 891.60,335.27 C898.01,302.52 894.29,267.04 898.95,267.04 C901.64,267.04 900.59,305.94 906.30,305.94 C907.94,305.94 909.19,298.42 913.65,297.27 C916.54,296.53 918.09,297.27 921.00,296.53 C925.44,295.40 926.65,288.02 928.35,288.02 C934.00,288.02 931.82,324.61 935.70,324.61 C939.17,324.61 937.13,291.99 943.05,291.99 C944.48,291.99 947.69,292.58 950.40,295.37 C955.04,300.14 954.09,307.10 957.75,307.10 C961.44,307.10 965.10,295.21 965.10,295.21 L965.10,360.3 L744.60,360.3 Z" fill="url(#ag)"/>
    <path d="M744.60,303.30 C744.60,303.30 748.58,289.01 751.95,289.01 C755.93,289.01 754.39,298.69 759.30,306.52 C761.74,310.42 762.56,312.47 766.65,312.47 C769.91,312.47 772.81,310.82 774.00,310.82 C780.16,310.82 778.70,349.06 781.35,349.06 C786.05,349.06 783.08,280.50 788.70,280.50 C790.43,280.50 792.42,300.49 796.05,300.49 C799.77,300.49 797.95,279.93 803.40,279.93 C805.30,279.93 809.06,279.93 810.75,281.99 C816.41,288.92 813.54,294.62 818.10,306.52 C820.89,313.82 821.99,313.36 825.45,320.40 C829.34,328.31 831.03,336.42 832.80,336.42 C838.38,336.42 836.29,281.33 840.15,281.33 C843.64,281.33 842.78,330.97 847.50,330.97 C850.13,330.97 849.13,304.05 854.85,304.05 C856.48,304.05 859.28,304.59 862.20,307.10 C866.63,310.91 865.60,316.68 869.55,316.68 C872.95,316.68 875.16,309.33 876.90,309.33 C882.51,309.33 878.59,342.12 884.25,342.12 C885.94,342.12 890.66,340.06 891.60,335.27 C898.01,302.52 894.29,267.04 898.95,267.04 C901.64,267.04 900.59,305.94 906.30,305.94 C907.94,305.94 909.19,298.42 913.65,297.27 C916.54,296.53 918.09,297.27 921.00,296.53 C925.44,295.40 926.65,288.02 928.35,288.02 C934.00,288.02 931.82,324.61 935.70,324.61 C939.17,324.61 937.13,291.99 943.05,291.99 C944.48,291.99 947.69,292.58 950.40,295.37 C955.04,300.14 954.09,307.10 957.75,307.10 C961.44,307.10 965.10,295.21 965.10,295.21" fill="none" stroke="#3D94F2" stroke-width="1.8"/>
    <line x1="740" y1="360.6" x2="969.7" y2="360.6" stroke="#A8ADB8" stroke-width="1"/>
    <g font-family="Liberation Sans" font-size="9.3" fill="#666" transform="translate(736,0) scale(0.91,1) translate(-736,0)"><text x="736" y="264.3" text-anchor="end">1,200,000</text><text x="736" y="280.6" text-anchor="end">1,000,000</text><text x="736" y="297.0" text-anchor="end">800,000</text><text x="736" y="313.4" text-anchor="end">600,000</text><text x="736" y="329.9" text-anchor="end">400,000</text><text x="736" y="346.3" text-anchor="end">200,000</text><text x="736" y="362.9" text-anchor="end">0</text></g>
    <g font-family="Liberation Sans" font-size="9" fill="#6A6A6A"><text x="744.4" y="371.2" text-anchor="middle">5/21</text><text x="773.8" y="371.2" text-anchor="middle">5/25</text><text x="803.2" y="371.2" text-anchor="middle">5/29</text><text x="832.6" y="371.2" text-anchor="middle">6/2</text><text x="862" y="371.2" text-anchor="middle">6/6</text><text x="891.4" y="371.2" text-anchor="middle">6/10</text><text x="920.8" y="371.2" text-anchor="middle">6/14</text><text x="950.2" y="371.2" text-anchor="middle">6/18</text></g>
    <text x="725" y="251.6" font-size="7.2" fill="#9A9A9A" font-family="Liberation Sans">单位：KW</text>
    <line x1="935.5" y1="255.8" x2="949.5" y2="255.8" stroke="#5470C6" stroke-width="1.4"/>
    <circle cx="942.5" cy="255.8" r="2.6" fill="#fff" stroke="#5470C6" stroke-width="1.2"/>
    <text x="952.8" y="258.9" font-size="8.8" fill="#555" font-family="Liberation Sans">用电量</text>
  </svg>
</div>
<!-- dist card -->
<div class="card" style="left:686px;top:397.5px;width:304.5px;height:200px">
  <div class="ttl">企业分布情况</div>
  <div class="hl" style="top:23.8px"></div>
  <svg class="abs" style="left:-1px;top:-1px" width="304.5" height="200" viewBox="686 397.5 304.5 200">
    <rect x="724.8" y="432.2" width="23.4" height="17.6" fill="#F6B82A"/>
    <rect x="751" y="432.2" width="23.4" height="17.6" fill="#3E8FF5"/>
    <text x="736.5" y="443.2" text-anchor="middle" font-size="8" font-weight="bold" fill="#1a1a1a">区域</text>
    <text x="762.7" y="443.2" text-anchor="middle" font-size="8" font-weight="bold" fill="#fff">行业</text>
    <path d="M781.00,537.00 A61.30,61.30 0 0 1 781.88,526.64 L788.09,527.70 A55.0,55.0 0 0 0 787.30,537.00 Z" fill="#5470c6" fill-opacity="0.26" stroke="#6373BE" stroke-opacity="0.46" stroke-width=".5"/><path d="M781.54,526.58 A61.65,61.65 0 0 1 784.17,516.46 L790.44,518.68 A55.0,55.0 0 0 0 788.09,527.70 Z" fill="#91cc75" fill-opacity="0.28" stroke="#6373BE" stroke-opacity="0.48" stroke-width=".5"/><path d="M783.84,516.35 A62.00,62.00 0 0 1 788.17,506.76 L794.28,510.18 A55.0,55.0 0 0 0 790.44,518.68 Z" fill="#fac858" fill-opacity="0.31" stroke="#6373BE" stroke-opacity="0.51" stroke-width=".5"/><path d="M787.87,506.59 A62.35,62.35 0 0 1 793.79,497.83 L799.51,502.45 A55.0,55.0 0 0 0 794.28,510.18 Z" fill="#ee6666" fill-opacity="0.34" stroke="#6373BE" stroke-opacity="0.54" stroke-width=".5"/><path d="M793.52,497.61 A62.70,62.70 0 0 1 800.88,489.93 L805.96,495.71 A55.0,55.0 0 0 0 799.51,502.45 Z" fill="#73c0de" fill-opacity="0.36" stroke="#6373BE" stroke-opacity="0.56" stroke-width=".5"/><path d="M800.64,489.67 A63.05,63.05 0 0 1 809.24,483.31 L813.46,490.17 A55.0,55.0 0 0 0 805.96,495.71 Z" fill="#3ba272" fill-opacity="0.39" stroke="#6373BE" stroke-opacity="0.59" stroke-width=".5"/><path d="M809.06,483.01 A63.40,63.40 0 0 1 818.66,478.17 L821.79,485.97 A55.0,55.0 0 0 0 813.46,490.17 Z" fill="#fc8452" fill-opacity="0.42" stroke="#6373BE" stroke-opacity="0.62" stroke-width=".5"/><path d="M818.53,477.85 A63.75,63.75 0 0 1 828.87,474.68 L830.71,483.23 A55.0,55.0 0 0 0 821.79,485.97 Z" fill="#9a60b4" fill-opacity="0.45" stroke="#6373BE" stroke-opacity="0.65" stroke-width=".5"/><path d="M828.80,474.34 A64.10,64.10 0 0 1 839.58,472.96 L839.97,482.05 A55.0,55.0 0 0 0 830.71,483.23 Z" fill="#ea7ccc" fill-opacity="0.47" stroke="#6373BE" stroke-opacity="0.67" stroke-width=".5"/><path d="M839.56,472.61 A64.45,64.45 0 0 1 850.49,473.07 L849.29,482.45 A55.0,55.0 0 0 0 839.97,482.05 Z" fill="#5470c6" fill-opacity="0.49" stroke="#6373BE" stroke-opacity="0.69" stroke-width=".5"/><path d="M850.53,472.72 A64.80,64.80 0 0 1 861.27,475.04 L858.41,484.41 A55.0,55.0 0 0 0 849.29,482.45 Z" fill="#91cc75" fill-opacity="0.50" stroke="#6373BE" stroke-opacity="0.70" stroke-width=".5"/><path d="M861.38,474.71 A65.15,65.15 0 0 1 871.63,478.83 L867.06,487.89 A55.0,55.0 0 0 0 858.41,484.41 Z" fill="#fac858" fill-opacity="0.50" stroke="#6373BE" stroke-opacity="0.70" stroke-width=".5"/><path d="M871.79,478.51 A65.50,65.50 0 0 1 881.25,484.34 L875.00,492.78 A55.0,55.0 0 0 0 867.06,487.89 Z" fill="#ee6666" fill-opacity="0.50" stroke="#6373BE" stroke-opacity="0.70" stroke-width=".5"/><path d="M881.46,484.06 A65.85,65.85 0 0 1 889.84,491.44 L882.01,498.94 A55.0,55.0 0 0 0 875.00,492.78 Z" fill="#73c0de" fill-opacity="0.50" stroke="#6373BE" stroke-opacity="0.70" stroke-width=".5"/><path d="M890.09,491.19 A66.20,66.20 0 0 1 897.15,499.93 L887.87,506.20 A55.0,55.0 0 0 0 882.01,498.94 Z" fill="#3ba272" fill-opacity="0.50" stroke="#6373BE" stroke-opacity="0.70" stroke-width=".5"/><path d="M897.44,499.73 A66.55,66.55 0 0 1 902.94,509.59 L892.42,514.35 A55.0,55.0 0 0 0 887.87,506.20 Z" fill="#fc8452" fill-opacity="0.50" stroke="#6373BE" stroke-opacity="0.70" stroke-width=".5"/><path d="M903.26,509.44 A66.90,66.90 0 0 1 907.04,520.14 L895.53,523.14 A55.0,55.0 0 0 0 892.42,514.35 Z" fill="#9a60b4" fill-opacity="0.50" stroke="#6373BE" stroke-opacity="0.70" stroke-width=".5"/><path d="M907.38,520.05 A67.25,67.25 0 0 1 909.31,531.30 L897.10,532.34 A55.0,55.0 0 0 0 895.53,523.14 Z" fill="#ea7ccc" fill-opacity="0.50" stroke="#6373BE" stroke-opacity="0.70" stroke-width=".5"/><path d="M909.66,531.27 A67.60,67.60 0 0 1 909.66,542.73 L897.10,541.66 A55.0,55.0 0 0 0 897.10,532.34 Z" fill="#5470c6" fill-opacity="0.50" stroke="#6373BE" stroke-opacity="0.70" stroke-width=".5"/><path d="M910.01,542.76 A67.95,67.95 0 0 1 908.06,554.12 L895.53,550.86 A55.0,55.0 0 0 0 897.10,541.66 Z" fill="#91cc75" fill-opacity="0.50" stroke="#6373BE" stroke-opacity="0.70" stroke-width=".5"/><path d="M908.40,554.21 A68.30,68.30 0 0 1 904.54,565.13 L892.42,559.65 A55.0,55.0 0 0 0 895.53,550.86 Z" fill="#fac858" fill-opacity="0.50" stroke="#6373BE" stroke-opacity="0.70" stroke-width=".5"/><path d="M904.86,565.28 A68.65,68.65 0 0 1 899.18,575.44 L887.87,567.80 A55.0,55.0 0 0 0 892.42,559.65 Z" fill="#ee6666" fill-opacity="0.50" stroke="#6373BE" stroke-opacity="0.70" stroke-width=".5"/><path d="M899.47,575.64 A69.00,69.00 0 0 1 892.11,584.74 L882.01,575.06 A55.0,55.0 0 0 0 887.87,567.80 Z" fill="#73c0de" fill-opacity="0.50" stroke="#6373BE" stroke-opacity="0.70" stroke-width=".5"/><path d="M892.37,584.99 A69.35,69.35 0 0 1 883.54,592.76 L875.00,581.22 A55.0,55.0 0 0 0 882.01,575.06 Z" fill="#3ba272" fill-opacity="0.50" stroke="#6373BE" stroke-opacity="0.70" stroke-width=".5"/><path d="M883.75,593.04 A69.70,69.70 0 0 1 873.68,599.24 L867.06,586.11 A55.0,55.0 0 0 0 875.00,581.22 Z" fill="#fc8452" fill-opacity="0.50" stroke="#6373BE" stroke-opacity="0.70" stroke-width=".5"/><path d="M873.84,599.55 A70.05,70.05 0 0 1 862.81,603.98 L858.41,589.59 A55.0,55.0 0 0 0 867.06,586.11 Z" fill="#9a60b4" fill-opacity="0.50" stroke="#6373BE" stroke-opacity="0.70" stroke-width=".5"/><path d="M862.91,604.31 A70.40,70.40 0 0 1 851.24,606.83 L849.29,591.55 A55.0,55.0 0 0 0 858.41,589.59 Z" fill="#ea7ccc" fill-opacity="0.50" stroke="#6373BE" stroke-opacity="0.70" stroke-width=".5"/><path d="M851.29,607.18 A70.75,70.75 0 0 1 839.30,607.69 L839.97,591.95 A55.0,55.0 0 0 0 849.29,591.55 Z" fill="#5470c6" fill-opacity="0.50" stroke="#6373BE" stroke-opacity="0.70" stroke-width=".5"/><path d="M839.28,608.04 A71.10,71.10 0 0 1 827.32,606.50 L830.71,590.77 A55.0,55.0 0 0 0 839.97,591.95 Z" fill="#91cc75" fill-opacity="0.50" stroke="#6373BE" stroke-opacity="0.70" stroke-width=".5"/><path d="M827.25,606.85 A71.45,71.45 0 0 1 815.66,603.30 L821.79,588.03 A55.0,55.0 0 0 0 830.71,590.77 Z" fill="#fac858" fill-opacity="0.50" stroke="#6373BE" stroke-opacity="0.70" stroke-width=".5"/><path d="M815.53,603.62 A71.80,71.80 0 0 1 804.65,598.14 L813.46,583.83 A55.0,55.0 0 0 0 821.79,588.03 Z" fill="#ee6666" fill-opacity="0.50" stroke="#6373BE" stroke-opacity="0.70" stroke-width=".5"/><path d="M804.47,598.44 A72.15,72.15 0 0 1 794.63,591.16 L805.96,578.29 A55.0,55.0 0 0 0 813.46,583.83 Z" fill="#73c0de" fill-opacity="0.50" stroke="#6373BE" stroke-opacity="0.70" stroke-width=".5"/><path d="M794.40,591.42 A72.50,72.50 0 0 1 785.89,582.55 L799.51,571.55 A55.0,55.0 0 0 0 805.96,578.29 Z" fill="#3ba272" fill-opacity="0.50" stroke="#6373BE" stroke-opacity="0.70" stroke-width=".5"/><path d="M785.62,582.77 A72.85,72.85 0 0 1 778.70,572.53 L794.28,563.82 A55.0,55.0 0 0 0 799.51,571.55 Z" fill="#fc8452" fill-opacity="0.50" stroke="#6373BE" stroke-opacity="0.70" stroke-width=".5"/><path d="M774.64,574.80 A77.50,77.50 0 0 1 769.23,562.82 L790.44,555.32 A55.0,55.0 0 0 0 794.28,563.82 Z" fill="#9a60b4" fill-opacity="0.90" stroke="#6373BE" stroke-opacity="1.00" stroke-width=".5"/><path d="M769.23,562.82 A77.50,77.50 0 0 1 765.91,550.10 L788.09,546.30 A55.0,55.0 0 0 0 790.44,555.32 Z" fill="#ea7ccc" fill-opacity="0.90" stroke="#6373BE" stroke-opacity="1.00" stroke-width=".5"/><path d="M765.91,550.10 A77.50,77.50 0 0 1 764.80,537.00 L787.30,537.00 A55.0,55.0 0 0 0 788.09,546.30 Z" fill="#5470c6" fill-opacity="0.90" stroke="#6373BE" stroke-opacity="1.00" stroke-width=".5"/>
    <g font-size="8.2" font-family="Liberation Sans"><text x="857.3" y="458.3" text-anchor="middle" fill="#9a9a9a">武都区</text><text x="857.3" y="466.2" text-anchor="middle" fill="#9a9a9a"><tspan font-weight="bold">1</tspan> 家</text><text x="890.8" y="470.3" text-anchor="middle" fill="#9a9a9a">康县</text><text x="890.8" y="478" text-anchor="middle" fill="#9a9a9a"><tspan font-weight="bold">1</tspan> 家</text><text x="918.5" y="487.8" text-anchor="middle" fill="#9a9a9a">兰州新区</text><text x="918.5" y="495.3" text-anchor="middle" fill="#9a9a9a"><tspan font-weight="bold">1</tspan> 家</text><text x="926.8" y="509.7" text-anchor="middle" fill="#9a9a9a">市辖区</text><text x="926.8" y="517.8" text-anchor="middle" fill="#9a9a9a"><tspan font-weight="bold">1</tspan> 家</text><text x="930" y="549" text-anchor="middle" fill="#9a9a9a">张掖市</text><text x="930" y="556.8" text-anchor="middle" fill="#9a9a9a"><tspan font-weight="bold">1</tspan> 家</text><text x="818.5" y="465.5" text-anchor="middle" fill="#b4b4b4">徽县</text><text x="818.5" y="473.5" text-anchor="middle" fill="#b4b4b4"><tspan font-weight="bold">1</tspan> 家</text><text x="783.5" y="473.6" text-anchor="middle" fill="#c4c4c4">庆阳市</text><text x="783.5" y="481.5" text-anchor="middle" fill="#c4c4c4"><tspan font-weight="bold">1</tspan> 家</text><text x="768.7" y="492" text-anchor="middle" fill="#cacaca">礼县</text><text x="768.7" y="500.5" text-anchor="middle" fill="#cacaca"><tspan font-weight="bold">1</tspan> 家</text><text x="753" y="515.3" text-anchor="middle" fill="#d0d0d0">崆峒区</text><text x="753" y="524" text-anchor="middle" fill="#d0d0d0"><tspan font-weight="bold">1</tspan> 家</text><text x="764.5" y="542.5" text-anchor="end" fill="#444">永登县</text><text x="764.5" y="550.5" text-anchor="end" fill="#444"><tspan font-weight="bold" fill="#222">1</tspan> 家</text><text x="766" y="566" text-anchor="end" fill="#555">永昌县</text></g>
  </svg>
</div>
</body></html>
